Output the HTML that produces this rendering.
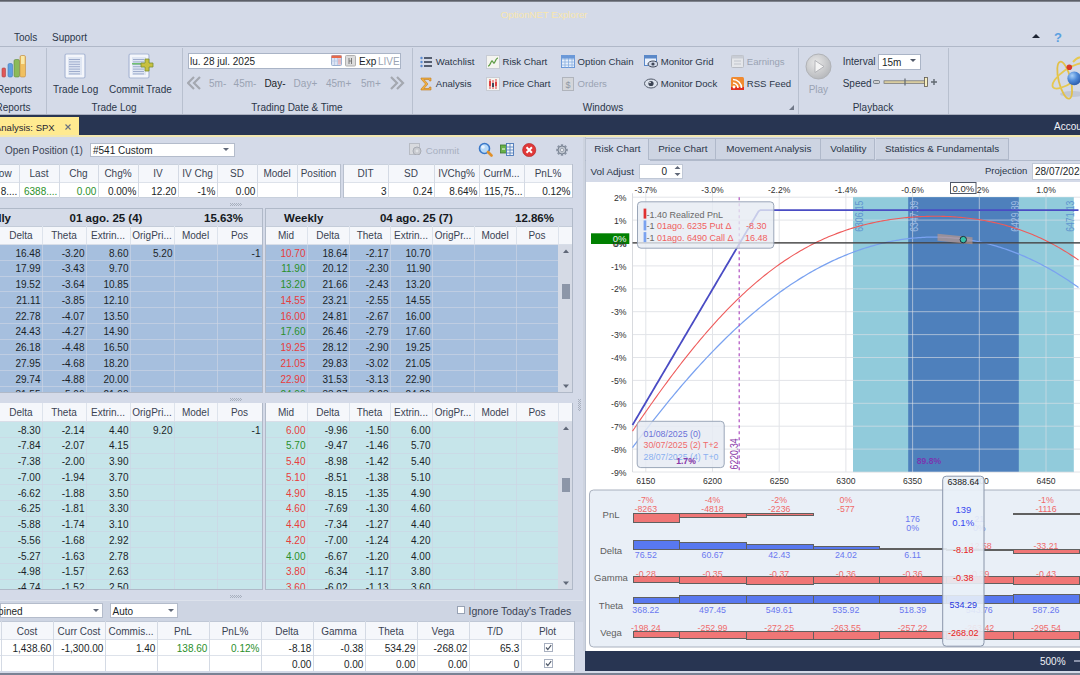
<!DOCTYPE html>
<html><head><meta charset="utf-8"><style>
html,body{margin:0;padding:0;}
body{width:1080px;height:675px;position:relative;overflow:hidden;background:#d4dae8;font-family:"Liberation Sans",sans-serif;}
body div, body svg{position:absolute;}
.t{white-space:nowrap;}
</style></head><body>
<div style="left:0px;top:0px;width:1080px;height:2px;background:linear-gradient(#4a4d55,#9095a0)"></div>
<div class="t" style="left:444.0px;width:200px;text-align:center;top:8.0px;line-height:14px;color:#f8e6ac;font-size:9.7px">OptionNET Explorer</div>
<div class="t" style="left:14px;top:31.0px;line-height:14px;color:#2b3648;font-size:10px">Tools</div>
<div class="t" style="left:52px;top:31.0px;line-height:14px;color:#2b3648;font-size:10px">Support</div>
<svg style="left:1031px;top:32px;" width="10" height="8" viewBox="0 0 10 8"><path d="M1 6 L5 2 L9 6 Z" fill="#1d2433"/></svg>
<div class="t" style="left:1050.0px;width:16px;text-align:center;top:31.0px;line-height:14px;color:#5aa0e0;font-size:13px;font-weight:bold">?</div>
<div style="left:0px;top:46px;width:1080px;height:1px;background:#b0b8c8"></div>
<div style="left:46px;top:48px;width:1px;height:66px;background:#b8c0cf"></div>
<div style="left:182px;top:48px;width:1px;height:66px;background:#b8c0cf"></div>
<div style="left:412px;top:48px;width:1px;height:66px;background:#b8c0cf"></div>
<div style="left:798px;top:48px;width:1px;height:66px;background:#b8c0cf"></div>
<div style="left:948px;top:48px;width:1px;height:66px;background:#b8c0cf"></div>
<div class="t" style="left:-47.0px;width:120px;text-align:center;top:101.0px;line-height:14px;color:#2b3648;font-size:10px">Reports</div>
<div class="t" style="left:54.0px;width:120px;text-align:center;top:101.0px;line-height:14px;color:#2b3648;font-size:10px">Trade Log</div>
<div class="t" style="left:237.0px;width:120px;text-align:center;top:101.0px;line-height:14px;color:#2b3648;font-size:10px">Trading Date &amp; Time</div>
<div class="t" style="left:543.0px;width:120px;text-align:center;top:101.0px;line-height:14px;color:#2b3648;font-size:10px">Windows</div>
<div class="t" style="left:813.0px;width:120px;text-align:center;top:101.0px;line-height:14px;color:#2b3648;font-size:10px">Playback</div>
<svg style="left:0px;top:54px;" width="28" height="24" viewBox="0 0 28 24">
      <rect x="2" y="14" width="3.5" height="9" rx="1" fill="#e05858" stroke="#b04040" stroke-width="0.6"/>
      <rect x="8" y="9.5" width="4.5" height="13.5" rx="1.5" fill="#5fa0e0" stroke="#3f78b8" stroke-width="0.6"/>
      <rect x="14" y="5.5" width="5.5" height="17.5" rx="1.5" fill="#8cba58" stroke="#5f8a38" stroke-width="0.6"/>
      <rect x="20" y="1.5" width="5.5" height="21.5" rx="1.5" fill="#f0c060" stroke="#c08a40" stroke-width="0.6"/>
      <rect x="21" y="2" width="3.5" height="8" fill="#f8e8a8"/></svg>
<div class="t" style="left:-3px;top:82.5px;line-height:14px;color:#2b3648;font-size:10px">Reports</div>
<svg style="left:64px;top:53px;" width="22" height="26" viewBox="0 0 22 26"><rect x="1" y="1" width="20" height="24" rx="1.5" fill="#f4f6fb" stroke="#a9b7d4" stroke-width="1.2"/><rect x="4" y="4" width="14" height="18" fill="#dfe6f3"/><rect x="5" y="6.0" width="11" height="1" fill="#9eaccc"/><rect x="5" y="8.4" width="11" height="1" fill="#9eaccc"/><rect x="5" y="10.8" width="11" height="1" fill="#9eaccc"/><rect x="5" y="13.2" width="11" height="1" fill="#9eaccc"/><rect x="5" y="15.6" width="11" height="1" fill="#9eaccc"/><rect x="5" y="18.0" width="11" height="1" fill="#9eaccc"/><rect x="5" y="20.4" width="11" height="1" fill="#9eaccc"/></svg>
<div class="t" style="left:53px;top:82.5px;line-height:14px;color:#2b3648;font-size:10px">Trade Log</div>
<svg style="left:128px;top:53px;" width="26" height="26" viewBox="0 0 26 26"><rect x="1" y="1" width="20" height="24" rx="1.5" fill="#f4f6fb" stroke="#a9b7d4" stroke-width="1.2"/><rect x="4" y="4" width="14" height="18" fill="#dfe6f3"/><rect x="5" y="6.0" width="11" height="1" fill="#9eaccc"/><rect x="5" y="8.4" width="11" height="1" fill="#9eaccc"/><rect x="5" y="10.8" width="11" height="1" fill="#9eaccc"/><rect x="5" y="13.2" width="11" height="1" fill="#9eaccc"/><rect x="5" y="15.6" width="11" height="1" fill="#9eaccc"/><rect x="5" y="18.0" width="11" height="1" fill="#9eaccc"/><rect x="5" y="20.4" width="11" height="1" fill="#9eaccc"/>
      <rect x="4" y="10" width="10" height="1.5" fill="#70c070"/>
      <path d="M17 6 h4 v4 h4 v4 h-4 v4 h-4 v-4 h-4 v-4 h4 z" fill="#c8c040" stroke="#789030" stroke-width="0.8"/></svg>
<div class="t" style="left:109px;top:82.5px;line-height:14px;color:#2b3648;font-size:10px">Commit Trade</div>
<div style="left:188px;top:53px;width:213px;height:16px;background:#fff;border:1px solid #aab4c6;box-sizing:border-box"></div>
<div class="t" style="left:190px;top:55.0px;line-height:14px;color:#1b1f28;font-size:10px">lu. 28 jul. 2025</div>
<svg style="left:331px;top:55px;" width="26" height="12" viewBox="0 0 26 12"><rect x="0.5" y="0.5" width="10" height="10" rx="1" fill="#dce4f4" stroke="#9ab0d0"/><rect x="0.5" y="0.5" width="10" height="2.5" fill="#e86848"/><path d="M3.5 3 v7 M6.5 3 v7 M0.5 6 h10" stroke="#b8c8e4" stroke-width="0.8"/><rect x="7" y="3.5" width="3" height="6" fill="#f0a0a0" opacity="0.6"/>
        <rect x="14.5" y="0.5" width="10" height="10.5" rx="1" fill="#dcdcdc" stroke="#b0b0b0"/><path d="M18 3 v6 M20.5 3 v6 M18 6 h2.5" stroke="#707070" stroke-width="0.9"/></svg>
<div class="t" style="left:359px;top:55.0px;line-height:14px;color:#1b1f28;font-size:10px">Exp</div>
<div class="t" style="left:378px;top:55.0px;line-height:14px;color:#9aa3b3;font-size:10px">LIVE</div>
<svg style="left:187px;top:76px;" width="15" height="14" viewBox="0 0 15 14"><path d="M7 1 L1 7 L7 13 M13 1 L7 7 L13 13" fill="none" stroke="#a4a8b0" stroke-width="2.2"/></svg>
<svg style="left:390px;top:76px;" width="15" height="14" viewBox="0 0 15 14"><path d="M1 1 L7 7 L1 13 M7 1 L13 7 L7 13" fill="none" stroke="#a4a8b0" stroke-width="2.2"/></svg>
<div class="t" style="left:209px;top:76.5px;line-height:14px;color:#9aa3b3;font-size:10px">5m-</div>
<div class="t" style="left:233.6px;top:76.5px;line-height:14px;color:#9aa3b3;font-size:10px">45m-</div>
<div class="t" style="left:264.4px;top:76.5px;line-height:14px;color:#1b1f28;font-size:10px">Day-</div>
<div class="t" style="left:293.6px;top:76.5px;line-height:14px;color:#9aa3b3;font-size:10px">Day+</div>
<div class="t" style="left:326px;top:76.5px;line-height:14px;color:#9aa3b3;font-size:10px">45m+</div>
<div class="t" style="left:361px;top:76.5px;line-height:14px;color:#9aa3b3;font-size:10px">5m+</div>
<div class="t" style="left:435.8px;top:54.9px;line-height:14px;color:#2b3648;font-size:9.6px">Watchlist</div>
<div class="t" style="left:502.5px;top:54.9px;line-height:14px;color:#2b3648;font-size:9.6px">Risk Chart</div>
<div class="t" style="left:577.5999999999999px;top:54.9px;line-height:14px;color:#2b3648;font-size:9.6px">Option Chain</div>
<div class="t" style="left:660.6999999999999px;top:54.9px;line-height:14px;color:#2b3648;font-size:9.6px">Monitor Grid</div>
<div class="t" style="left:746.8px;top:54.9px;line-height:14px;color:#9aa3b3;font-size:9.6px">Earnings</div>
<div class="t" style="left:435.8px;top:77.0px;line-height:14px;color:#2b3648;font-size:9.6px">Analysis</div>
<div class="t" style="left:502.5px;top:77.0px;line-height:14px;color:#2b3648;font-size:9.6px">Price Chart</div>
<div class="t" style="left:577.5999999999999px;top:77.0px;line-height:14px;color:#9aa3b3;font-size:9.6px">Orders</div>
<div class="t" style="left:660.6999999999999px;top:77.0px;line-height:14px;color:#2b3648;font-size:9.6px">Monitor Dock</div>
<div class="t" style="left:746.8px;top:77.0px;line-height:14px;color:#2b3648;font-size:9.6px">RSS Feed</div>
<svg style="left:420px;top:56px;" width="13" height="12" viewBox="0 0 13 12"><circle cx="1.5" cy="2" r="1.2" fill="#5a8ad0"/><circle cx="1.5" cy="6" r="1.2" fill="#5a8ad0"/><circle cx="1.5" cy="10" r="1.2" fill="#5a8ad0"/><path d="M4 2 h8 M4 6 h8 M4 10 h8" stroke="#2b3648" stroke-width="1.4"/></svg>
<svg style="left:486px;top:55px;" width="14" height="14" viewBox="0 0 14 14"><rect x="0.5" y="0.5" width="13" height="13" fill="#f4f4f0" stroke="#c8ccd4"/><path d="M2 11 C5 11 5 3 7 7 S 9 3 12 3" fill="none" stroke="#5a9a40" stroke-width="1.2"/></svg>
<svg style="left:561px;top:55px;" width="14" height="13" viewBox="0 0 14 13"><rect x="0.5" y="0.5" width="13" height="12" fill="#e8f0fc" stroke="#6a98d8"/><path d="M0.5 4 h13 M0.5 7 h13 M0.5 10 h13 M4 0.5 v12 M7.5 0.5 v12 M11 0.5 v12" stroke="#88aee0" stroke-width="0.8"/><rect x="0.5" y="0.5" width="13" height="3" fill="#6a98d8"/></svg>
<svg style="left:644px;top:55px;" width="14" height="13" viewBox="0 0 14 13"><rect x="0.5" y="0.5" width="12" height="10" fill="#e8f0fc" stroke="#5a88c8"/><rect x="0.5" y="0.5" width="12" height="3" fill="#5a88c8"/><ellipse cx="9" cy="9" rx="5" ry="3" fill="#d0d8e8" stroke="#404858"/><circle cx="9" cy="9" r="1.6" fill="#404858"/></svg>
<svg style="left:731px;top:55px;" width="13" height="13" viewBox="0 0 13 13"><rect x="0.5" y="0.5" width="12" height="12" rx="1" fill="#e4e6ea" stroke="#b8bcc4"/><rect x="0.5" y="0.5" width="12" height="3" fill="#c8ccd4"/><path d="M3 6 h7 M3 9 h7" stroke="#c0c4cc"/></svg>
<svg style="left:420px;top:77px;" width="12" height="14" viewBox="0 0 12 14"><path d="M1 1 h10 v3 h-1.5 l-0.5 -1.5 h-5 l4 4.5 -4 4.5 h5 l0.5 -1.5 h1.5 v3 h-10 v-1 l4.5 -5 -4.5 -5 z" fill="#f0b040" stroke="#c07820" stroke-width="0.6"/></svg>
<svg style="left:486px;top:77px;" width="14" height="14" viewBox="0 0 14 14"><rect x="0.5" y="0.5" width="13" height="13" fill="#f4f4f0" stroke="#c8ccd4"/><path d="M4 2 v10 M7 3 v9 M10 2 v10" stroke="#e04040" stroke-width="1"/><rect x="3" y="4" width="2" height="5" fill="#e04040"/><rect x="9" y="5" width="2" height="4" fill="#e04040"/><rect x="6" y="6" width="2" height="4" fill="#404858"/></svg>
<svg style="left:562px;top:77px;" width="12" height="14" viewBox="0 0 12 14"><rect x="0.5" y="0.5" width="11" height="13" fill="#d4d6da" stroke="#b0b4bc"/><text x="6" y="11" font-size="9" text-anchor="middle" fill="#9098a4" font-family="Liberation Sans">$</text></svg>
<svg style="left:644px;top:78px;" width="14" height="11" viewBox="0 0 14 11"><ellipse cx="7" cy="5.5" rx="6.5" ry="4.5" fill="#dce2ec" stroke="#505868"/><circle cx="7" cy="5.5" r="2.6" fill="#3c4454"/><circle cx="6" cy="4.5" r="0.8" fill="#fff"/></svg>
<svg style="left:731px;top:77px;" width="13" height="13" viewBox="0 0 13 13"><rect x="0" y="0" width="13" height="13" rx="1.5" fill="#f08a30"/><rect x="0" y="10" width="13" height="3" fill="#e03020"/><circle cx="3" cy="10" r="1.4" fill="#fff"/><path d="M2 6 a5 5 0 0 1 5 5 M2 2.5 a8.5 8.5 0 0 1 8.5 8.5" fill="none" stroke="#fff" stroke-width="1.6"/></svg>
<svg style="left:789px;top:105px;" width="6" height="6" viewBox="0 0 6 6"><path d="M5 0 v5 h-5 z" fill="#707888"/></svg>
<svg style="left:805px;top:53px;" width="27" height="27" viewBox="0 0 27 27"><defs><radialGradient id="pg" cx="0.4" cy="0.35" r="0.7"><stop offset="0" stop-color="#e8e8e8"/><stop offset="1" stop-color="#b4b6ba"/></radialGradient></defs><circle cx="13.5" cy="13.5" r="12.5" fill="url(#pg)" stroke="#b0b2b6"/><path d="M10 7.5 L19 13.5 L10 19.5 Z" fill="#f4f4f4" stroke="#a8aaae" stroke-width="0.8"/></svg>
<div class="t" style="left:798.4px;width:40px;text-align:center;top:83.4px;line-height:14px;color:#9aa3b3;font-size:10px">Play</div>
<div class="t" style="left:842.7px;top:55.0px;line-height:14px;color:#2b3648;font-size:10px">Interval</div>
<div style="left:878px;top:53.5px;width:43px;height:16px;background:#fff;border:1px solid #aab4c6;box-sizing:border-box"></div>
<div class="t" style="left:882px;top:55.5px;line-height:14px;color:#1b1f28;font-size:10px">15m</div>
<svg style="left:910px;top:59px;" width="7" height="4" viewBox="0 0 7 4"><path d="M0 0 h6 l-3 3 z" fill="#505868"/></svg>
<div class="t" style="left:842.7px;top:76.5px;line-height:14px;color:#2b3648;font-size:10px">Speed</div>
<svg style="left:872px;top:76px;" width="66" height="12" viewBox="0 0 66 12"><rect x="1.5" y="4.5" width="6" height="3" rx="1" fill="#d0d0d0" stroke="#606870" stroke-width="0.8"/>
       <rect x="12" y="4.8" width="43" height="2.6" fill="#d8cca0" stroke="#707070" stroke-width="0.7"/>
       <path d="M33 2.5 v7" stroke="#606870" stroke-width="1.2"/>
       <rect x="52.5" y="1.5" width="3" height="9" fill="#f6eec0" stroke="#605a50" stroke-width="0.8"/>
       <path d="M59 6 h6 M62 3 v6" stroke="#606870" stroke-width="1.4"/></svg>
<svg style="left:1040px;top:50px;" width="40" height="60" viewBox="0 0 40 60"><ellipse cx="32" cy="44" rx="12" ry="3" fill="#bcc2ce" opacity="0.8"/>
       <ellipse cx="24.7" cy="30.2" rx="6" ry="19" fill="none" stroke="#e2c048" stroke-width="1.8" transform="rotate(-14 24.7 30.2)"/>
       <ellipse cx="29" cy="26" rx="7" ry="19.5" fill="none" stroke="#e6c850" stroke-width="1.8" transform="rotate(55 29 26)"/>
       <path d="M33 12 Q40 4 44 10" fill="none" stroke="#e6c850" stroke-width="2"/>
       <defs><radialGradient id="sph" cx="0.35" cy="0.3" r="0.75"><stop offset="0" stop-color="#a8d0f8"/><stop offset="0.5" stop-color="#4f8ad8"/><stop offset="1" stop-color="#2a5aa8"/></radialGradient></defs>
       <circle cx="34.2" cy="28.4" r="6.8" fill="url(#sph)"/>
       <circle cx="29.3" cy="17.3" r="2.8" fill="#d83828"/></svg>
<div style="left:0px;top:114px;width:1080px;height:1px;background:#a8aebe"></div>
<div style="left:0px;top:115px;width:1080px;height:20px;background:#283552"></div>
<div style="left:0px;top:117px;width:79px;height:18px;background:#ffea90"></div>
<div style="left:0px;top:135px;width:1080px;height:2px;background:#f2e7b0"></div>
<div class="t" style="left:-5px;top:121.0px;line-height:14px;color:#1f2430;font-size:9.5px">Analysis: SPX</div>
<svg style="left:65px;top:124px;" width="6" height="6" viewBox="0 0 6 6"><path d="M0.5 0.5 L5.5 5.5 M5.5 0.5 L0.5 5.5" stroke="#687080" stroke-width="1.1"/></svg>
<div class="t" style="left:1054px;top:120.0px;line-height:14px;color:#f0f2f8;font-size:10px">Accou</div>
<div class="t" style="left:5px;top:144.0px;line-height:14px;color:#3a4353;font-size:10px">Open Position (1)</div>
<div style="left:90px;top:142.5px;width:144.5px;height:14.5px;background:#fff;border:1px solid #b4bccb;box-sizing:border-box"></div>
<div class="t" style="left:93px;top:144.0px;line-height:14px;color:#1b1f28;font-size:10px">#541 Custom</div>
<svg style="left:223px;top:148px;" width="7" height="4" viewBox="0 0 7 4"><path d="M0 0 h6 l-3 3 z" fill="#606878"/></svg>
<svg style="left:409px;top:143px;" width="13" height="12" viewBox="0 0 13 12"><rect x="0.5" y="0.5" width="10" height="11" fill="#d8dade" stroke="#b8bcc4"/><circle cx="8" cy="8" r="4" fill="#c8cacf" stroke="#a8acb4"/><circle cx="8" cy="8" r="1.4" fill="#e0e2e6"/></svg>
<div class="t" style="left:425.8px;top:144.0px;line-height:14px;color:#a8b0c0;font-size:9.7px">Commit</div>
<svg style="left:478px;top:142px;" width="15" height="15" viewBox="0 0 15 15"><circle cx="6.5" cy="6.5" r="5" fill="#b8daf8" stroke="#3a78c8" stroke-width="1.6"/><circle cx="5" cy="5" r="1.8" fill="#eaf4fe"/><path d="M10 10 L13.5 13.5" stroke="#e0902a" stroke-width="2.6" stroke-linecap="round"/></svg>
<svg style="left:500px;top:143px;" width="14" height="13" viewBox="0 0 14 13"><rect x="0.5" y="2" width="6" height="8" fill="#68b048" stroke="#3c7830" stroke-width="0.8"/><rect x="6.5" y="0.5" width="7" height="12" fill="#f0f4fa" stroke="#4a78b8" stroke-width="0.9"/><path d="M6.5 4 h7 M6.5 7 h7 M6.5 10 h7 M10 0.5 v12" stroke="#4a78b8" stroke-width="0.8"/><path d="M2 6 h3" stroke="#fff"/></svg>
<svg style="left:522px;top:143px;" width="15" height="14" viewBox="0 0 15 14"><circle cx="7.2" cy="7" r="6.6" fill="#e03838" stroke="#b02020" stroke-width="0.6"/><path d="M4.5 4.3 L9.9 9.7 M9.9 4.3 L4.5 9.7" stroke="#fff" stroke-width="2"/></svg>
<svg style="left:555px;top:143px;" width="14" height="14" viewBox="0 0 14 14"><g transform="translate(7 7)"><path d="M5.80 0.00 L3.50 0.00 M4.10 4.10 L2.47 2.47 M0.00 5.80 L0.00 3.50 M-4.10 4.10 L-2.47 2.47 M-5.80 0.00 L-3.50 0.00 M-4.10 -4.10 L-2.47 -2.47 M-0.00 -5.80 L-0.00 -3.50 M4.10 -4.10 L2.47 -2.47" stroke="#8a94a4" stroke-width="2.4"/><circle r="4" fill="#c0c6d0" stroke="#7a8494" stroke-width="1"/><circle r="1.6" fill="#eef0f4" stroke="#7a8494" stroke-width="0.6"/></g></svg>
<div style="left:0px;top:164px;width:341px;height:18px;background:#f5f7fb"></div>
<div style="left:0px;top:182px;width:341px;height:15px;background:#fff"></div>
<div style="left:0px;top:164px;width:341px;height:1px;background:#c8d0dc"></div>
<div style="left:0px;top:182px;width:341px;height:1px;background:#dde2ea"></div>
<div style="left:0px;top:197px;width:341px;height:1px;background:#c8d0dc"></div>
<div style="left:19px;top:164px;width:1px;height:34px;background:#d4dae4"></div>
<div style="left:59px;top:164px;width:1px;height:34px;background:#d4dae4"></div>
<div style="left:98px;top:164px;width:1px;height:34px;background:#d4dae4"></div>
<div style="left:138px;top:164px;width:1px;height:34px;background:#d4dae4"></div>
<div style="left:178px;top:164px;width:1px;height:34px;background:#d4dae4"></div>
<div style="left:217px;top:164px;width:1px;height:34px;background:#d4dae4"></div>
<div style="left:257px;top:164px;width:1px;height:34px;background:#d4dae4"></div>
<div style="left:297px;top:164px;width:1px;height:34px;background:#d4dae4"></div>
<div style="left:340px;top:164px;width:1px;height:34px;background:#d4dae4"></div>
<div style="left:340px;top:164px;width:1px;height:34px;background:#b8c0ce"></div>
<div class="t" style="left:-27.5px;width:60px;text-align:center;top:166.8px;line-height:14px;color:#3a4353;font-size:10px">Low</div>
<div class="t" style="right:1062.7px;top:184.7px;line-height:14px;color:#1b1f28;font-size:10px">8....</div>
<div class="t" style="left:9.0px;width:60px;text-align:center;top:166.8px;line-height:14px;color:#3a4353;font-size:10px">Last</div>
<div class="t" style="right:1022.7px;top:184.7px;line-height:14px;color:#2a8f2a;font-size:10px">6388....</div>
<div class="t" style="left:48.5px;width:60px;text-align:center;top:166.8px;line-height:14px;color:#3a4353;font-size:10px">Chg</div>
<div class="t" style="right:983.7px;top:184.7px;line-height:14px;color:#2a8f2a;font-size:10px">0.00</div>
<div class="t" style="left:88.0px;width:60px;text-align:center;top:166.8px;line-height:14px;color:#3a4353;font-size:10px">Chg%</div>
<div class="t" style="right:943.7px;top:184.7px;line-height:14px;color:#1b1f28;font-size:10px">0.00%</div>
<div class="t" style="left:128.0px;width:60px;text-align:center;top:166.8px;line-height:14px;color:#3a4353;font-size:10px">IV</div>
<div class="t" style="right:903.7px;top:184.7px;line-height:14px;color:#1b1f28;font-size:10px">12.20</div>
<div class="t" style="left:167.5px;width:60px;text-align:center;top:166.8px;line-height:14px;color:#3a4353;font-size:10px">IV Chg</div>
<div class="t" style="right:864.7px;top:184.7px;line-height:14px;color:#1b1f28;font-size:10px">-1%</div>
<div class="t" style="left:207.0px;width:60px;text-align:center;top:166.8px;line-height:14px;color:#3a4353;font-size:10px">SD</div>
<div class="t" style="right:824.7px;top:184.7px;line-height:14px;color:#1b1f28;font-size:10px">0.00</div>
<div class="t" style="left:247.0px;width:60px;text-align:center;top:166.8px;line-height:14px;color:#3a4353;font-size:10px">Model</div>
<div class="t" style="left:288.5px;width:60px;text-align:center;top:166.8px;line-height:14px;color:#3a4353;font-size:10px">Position</div>
<div style="left:343px;top:164px;width:229px;height:18px;background:#f5f7fb"></div>
<div style="left:343px;top:182px;width:229px;height:15px;background:#fff"></div>
<div style="left:343px;top:164px;width:230px;height:1px;background:#c8d0dc"></div>
<div style="left:343px;top:182px;width:230px;height:1px;background:#dde2ea"></div>
<div style="left:343px;top:197px;width:230px;height:1px;background:#c8d0dc"></div>
<div style="left:343px;top:164px;width:1px;height:34px;background:#d4dae4"></div>
<div style="left:388px;top:164px;width:1px;height:34px;background:#d4dae4"></div>
<div style="left:434px;top:164px;width:1px;height:34px;background:#d4dae4"></div>
<div style="left:479px;top:164px;width:1px;height:34px;background:#d4dae4"></div>
<div style="left:524px;top:164px;width:1px;height:34px;background:#d4dae4"></div>
<div style="left:572px;top:164px;width:1px;height:34px;background:#d4dae4"></div>
<div style="left:343px;top:164px;width:1px;height:34px;background:#b8c0ce"></div>
<div style="left:572px;top:164px;width:1px;height:34px;background:#b8c0ce"></div>
<div class="t" style="left:335.5px;width:60px;text-align:center;top:166.8px;line-height:14px;color:#3a4353;font-size:10px">DIT</div>
<div class="t" style="right:693.5px;top:184.7px;line-height:14px;color:#1b1f28;font-size:10px">3</div>
<div class="t" style="left:381.0px;width:60px;text-align:center;top:166.8px;line-height:14px;color:#3a4353;font-size:10px">SD</div>
<div class="t" style="right:647.5px;top:184.7px;line-height:14px;color:#1b1f28;font-size:10px">0.24</div>
<div class="t" style="left:426.5px;width:60px;text-align:center;top:166.8px;line-height:14px;color:#3a4353;font-size:10px">IVChg%</div>
<div class="t" style="right:602.5px;top:184.7px;line-height:14px;color:#1b1f28;font-size:10px">8.64%</div>
<div class="t" style="left:471.5px;width:60px;text-align:center;top:166.8px;line-height:14px;color:#3a4353;font-size:10px">CurrM...</div>
<div class="t" style="right:557.5px;top:184.7px;line-height:14px;color:#1b1f28;font-size:10px">115,75...</div>
<div class="t" style="left:518.0px;width:60px;text-align:center;top:166.8px;line-height:14px;color:#3a4353;font-size:10px">PnL%</div>
<div class="t" style="right:509.5px;top:184.7px;line-height:14px;color:#1b1f28;font-size:10px">0.12%</div>
<svg style="left:230px;top:202.5px;" width="12" height="4" viewBox="0 0 12 4"><rect x="0" y="0" width="1" height="1" fill="#a8b0be"/><rect x="0" y="2" width="1" height="1" fill="#a8b0be"/><rect x="1" y="1" width="1" height="1" fill="#a8b0be"/><rect x="2" y="0" width="1" height="1" fill="#a8b0be"/><rect x="2" y="2" width="1" height="1" fill="#a8b0be"/><rect x="3" y="1" width="1" height="1" fill="#a8b0be"/><rect x="4" y="0" width="1" height="1" fill="#a8b0be"/><rect x="4" y="2" width="1" height="1" fill="#a8b0be"/><rect x="5" y="1" width="1" height="1" fill="#a8b0be"/><rect x="6" y="0" width="1" height="1" fill="#a8b0be"/><rect x="6" y="2" width="1" height="1" fill="#a8b0be"/><rect x="7" y="1" width="1" height="1" fill="#a8b0be"/><rect x="8" y="0" width="1" height="1" fill="#a8b0be"/><rect x="8" y="2" width="1" height="1" fill="#a8b0be"/><rect x="9" y="1" width="1" height="1" fill="#a8b0be"/><rect x="10" y="0" width="1" height="1" fill="#a8b0be"/><rect x="10" y="2" width="1" height="1" fill="#a8b0be"/><rect x="11" y="1" width="1" height="1" fill="#a8b0be"/></svg>
<div style="left:-4px;top:208px;width:267px;height:185px;border:1px solid #b0b9c8;box-sizing:border-box;background:#a6bfde"></div>
<div style="left:-3px;top:209px;width:265px;height:17px;background:#d5dbe8"></div>
<div class="t" style="right:1069px;top:211.0px;line-height:14px;color:#141820;font-size:11.5px;font-weight:bold">dly</div>
<div class="t" style="left:46.0px;width:120px;text-align:center;top:211.0px;line-height:14px;color:#141820;font-size:11.5px;font-weight:bold">01 ago. 25 (4)</div>
<div class="t" style="right:837px;top:211.0px;line-height:14px;color:#141820;font-size:11.5px;font-weight:bold">15.63%</div>
<div style="left:-3px;top:226px;width:265px;height:18px;background:#f5f7fb"></div>
<div style="left:-3px;top:226px;width:265px;height:1px;background:#c4ccd9"></div>
<div style="left:-3px;top:244px;width:265px;height:1px;background:#d8dee8"></div>
<div style="left:42px;top:226px;width:1px;height:18px;background:#dde3ec"></div>
<div style="left:42px;top:245px;width:1px;height:147px;background:rgba(205,212,228,0.65)"></div>
<div style="left:86px;top:226px;width:1px;height:18px;background:#dde3ec"></div>
<div style="left:86px;top:245px;width:1px;height:147px;background:rgba(205,212,228,0.65)"></div>
<div style="left:130px;top:226px;width:1px;height:18px;background:#dde3ec"></div>
<div style="left:130px;top:245px;width:1px;height:147px;background:rgba(205,212,228,0.65)"></div>
<div style="left:174px;top:226px;width:1px;height:18px;background:#dde3ec"></div>
<div style="left:174px;top:245px;width:1px;height:147px;background:rgba(205,212,228,0.65)"></div>
<div style="left:217px;top:226px;width:1px;height:18px;background:#dde3ec"></div>
<div style="left:217px;top:245px;width:1px;height:147px;background:rgba(205,212,228,0.65)"></div>
<div class="t" style="left:-9.0px;width:60px;text-align:center;top:229.0px;line-height:14px;color:#3a4353;font-size:10px">Delta</div>
<div class="t" style="left:34.0px;width:60px;text-align:center;top:229.0px;line-height:14px;color:#3a4353;font-size:10px">Theta</div>
<div class="t" style="left:78.0px;width:60px;text-align:center;top:229.0px;line-height:14px;color:#3a4353;font-size:10px">Extrin...</div>
<div class="t" style="left:122.0px;width:60px;text-align:center;top:229.0px;line-height:14px;color:#3a4353;font-size:10px">OrigPri...</div>
<div class="t" style="left:165.5px;width:60px;text-align:center;top:229.0px;line-height:14px;color:#3a4353;font-size:10px">Model</div>
<div class="t" style="left:209.5px;width:60px;text-align:center;top:229.0px;line-height:14px;color:#3a4353;font-size:10px">Pos</div>
<div style="left:-3px;top:245px;width:265px;height:147px;overflow:hidden">
<div style="left:0px;top:14.75px;width:266px;height:1px;background:rgba(205,212,228,0.65)"></div>
<div class="t" style="right:221.50px;top:0.70px;line-height:15.75px;color:#1b1f28;font-size:10px">16.48</div>
<div class="t" style="right:177.50px;top:0.70px;line-height:15.75px;color:#1b1f28;font-size:10px">-3.20</div>
<div class="t" style="right:133.50px;top:0.70px;line-height:15.75px;color:#1b1f28;font-size:10px">8.60</div>
<div class="t" style="right:89.50px;top:0.70px;line-height:15.75px;color:#1b1f28;font-size:10px">5.20</div>
<div class="t" style="right:1.50px;top:0.70px;line-height:15.75px;color:#1b1f28;font-size:10px">-1</div>
<div style="left:0px;top:30.50px;width:266px;height:1px;background:rgba(205,212,228,0.65)"></div>
<div class="t" style="right:221.50px;top:16.45px;line-height:15.75px;color:#1b1f28;font-size:10px">17.99</div>
<div class="t" style="right:177.50px;top:16.45px;line-height:15.75px;color:#1b1f28;font-size:10px">-3.43</div>
<div class="t" style="right:133.50px;top:16.45px;line-height:15.75px;color:#1b1f28;font-size:10px">9.70</div>
<div style="left:0px;top:46.25px;width:266px;height:1px;background:rgba(205,212,228,0.65)"></div>
<div class="t" style="right:221.50px;top:32.20px;line-height:15.75px;color:#1b1f28;font-size:10px">19.52</div>
<div class="t" style="right:177.50px;top:32.20px;line-height:15.75px;color:#1b1f28;font-size:10px">-3.64</div>
<div class="t" style="right:133.50px;top:32.20px;line-height:15.75px;color:#1b1f28;font-size:10px">10.85</div>
<div style="left:0px;top:62.00px;width:266px;height:1px;background:rgba(205,212,228,0.65)"></div>
<div class="t" style="right:221.50px;top:47.95px;line-height:15.75px;color:#1b1f28;font-size:10px">21.11</div>
<div class="t" style="right:177.50px;top:47.95px;line-height:15.75px;color:#1b1f28;font-size:10px">-3.85</div>
<div class="t" style="right:133.50px;top:47.95px;line-height:15.75px;color:#1b1f28;font-size:10px">12.10</div>
<div style="left:0px;top:77.75px;width:266px;height:1px;background:rgba(205,212,228,0.65)"></div>
<div class="t" style="right:221.50px;top:63.70px;line-height:15.75px;color:#1b1f28;font-size:10px">22.78</div>
<div class="t" style="right:177.50px;top:63.70px;line-height:15.75px;color:#1b1f28;font-size:10px">-4.07</div>
<div class="t" style="right:133.50px;top:63.70px;line-height:15.75px;color:#1b1f28;font-size:10px">13.50</div>
<div style="left:0px;top:93.50px;width:266px;height:1px;background:rgba(205,212,228,0.65)"></div>
<div class="t" style="right:221.50px;top:79.45px;line-height:15.75px;color:#1b1f28;font-size:10px">24.43</div>
<div class="t" style="right:177.50px;top:79.45px;line-height:15.75px;color:#1b1f28;font-size:10px">-4.27</div>
<div class="t" style="right:133.50px;top:79.45px;line-height:15.75px;color:#1b1f28;font-size:10px">14.90</div>
<div style="left:0px;top:109.25px;width:266px;height:1px;background:rgba(205,212,228,0.65)"></div>
<div class="t" style="right:221.50px;top:95.20px;line-height:15.75px;color:#1b1f28;font-size:10px">26.18</div>
<div class="t" style="right:177.50px;top:95.20px;line-height:15.75px;color:#1b1f28;font-size:10px">-4.48</div>
<div class="t" style="right:133.50px;top:95.20px;line-height:15.75px;color:#1b1f28;font-size:10px">16.50</div>
<div style="left:0px;top:125.00px;width:266px;height:1px;background:rgba(205,212,228,0.65)"></div>
<div class="t" style="right:221.50px;top:110.95px;line-height:15.75px;color:#1b1f28;font-size:10px">27.95</div>
<div class="t" style="right:177.50px;top:110.95px;line-height:15.75px;color:#1b1f28;font-size:10px">-4.68</div>
<div class="t" style="right:133.50px;top:110.95px;line-height:15.75px;color:#1b1f28;font-size:10px">18.20</div>
<div style="left:0px;top:140.75px;width:266px;height:1px;background:rgba(205,212,228,0.65)"></div>
<div class="t" style="right:221.50px;top:126.70px;line-height:15.75px;color:#1b1f28;font-size:10px">29.74</div>
<div class="t" style="right:177.50px;top:126.70px;line-height:15.75px;color:#1b1f28;font-size:10px">-4.88</div>
<div class="t" style="right:133.50px;top:126.70px;line-height:15.75px;color:#1b1f28;font-size:10px">20.00</div>
<div style="left:0px;top:156.50px;width:266px;height:1px;background:rgba(205,212,228,0.65)"></div>
<div class="t" style="right:221.50px;top:142.45px;line-height:15.75px;color:#1b1f28;font-size:10px">31.55</div>
<div class="t" style="right:177.50px;top:142.45px;line-height:15.75px;color:#1b1f28;font-size:10px">-5.06</div>
<div class="t" style="right:133.50px;top:142.45px;line-height:15.75px;color:#1b1f28;font-size:10px">21.90</div>
</div>
<div style="left:265px;top:208px;width:308px;height:185px;border:1px solid #b0b9c8;box-sizing:border-box;background:#a6bfde"></div>
<div style="left:266px;top:209px;width:306px;height:17px;background:#d5dbe8"></div>
<div class="t" style="left:284px;top:211.0px;line-height:14px;color:#141820;font-size:11.5px;font-weight:bold">Weekly</div>
<div class="t" style="left:356.4px;width:120px;text-align:center;top:211.0px;line-height:14px;color:#141820;font-size:11.5px;font-weight:bold">04 ago. 25 (7)</div>
<div class="t" style="right:526px;top:211.0px;line-height:14px;color:#141820;font-size:11.5px;font-weight:bold">12.86%</div>
<div style="left:266px;top:226px;width:306px;height:18px;background:#f5f7fb"></div>
<div style="left:266px;top:226px;width:306px;height:1px;background:#c4ccd9"></div>
<div style="left:266px;top:244px;width:306px;height:1px;background:#d8dee8"></div>
<div style="left:307px;top:226px;width:1px;height:18px;background:#dde3ec"></div>
<div style="left:307px;top:245px;width:1px;height:147px;background:rgba(205,212,228,0.65)"></div>
<div style="left:349px;top:226px;width:1px;height:18px;background:#dde3ec"></div>
<div style="left:349px;top:245px;width:1px;height:147px;background:rgba(205,212,228,0.65)"></div>
<div style="left:390px;top:226px;width:1px;height:18px;background:#dde3ec"></div>
<div style="left:390px;top:245px;width:1px;height:147px;background:rgba(205,212,228,0.65)"></div>
<div style="left:432px;top:226px;width:1px;height:18px;background:#dde3ec"></div>
<div style="left:432px;top:245px;width:1px;height:147px;background:rgba(205,212,228,0.65)"></div>
<div style="left:474px;top:226px;width:1px;height:18px;background:#dde3ec"></div>
<div style="left:474px;top:245px;width:1px;height:147px;background:rgba(205,212,228,0.65)"></div>
<div style="left:516px;top:226px;width:1px;height:18px;background:#dde3ec"></div>
<div style="left:516px;top:245px;width:1px;height:147px;background:rgba(205,212,228,0.65)"></div>
<div style="left:558px;top:226px;width:1px;height:18px;background:#dde3ec"></div>
<div style="left:558px;top:245px;width:1px;height:147px;background:rgba(205,212,228,0.65)"></div>
<div class="t" style="left:256.0px;width:60px;text-align:center;top:229.0px;line-height:14px;color:#3a4353;font-size:10px">Mid</div>
<div class="t" style="left:298.0px;width:60px;text-align:center;top:229.0px;line-height:14px;color:#3a4353;font-size:10px">Delta</div>
<div class="t" style="left:339.5px;width:60px;text-align:center;top:229.0px;line-height:14px;color:#3a4353;font-size:10px">Theta</div>
<div class="t" style="left:381.0px;width:60px;text-align:center;top:229.0px;line-height:14px;color:#3a4353;font-size:10px">Extrin...</div>
<div class="t" style="left:423.0px;width:60px;text-align:center;top:229.0px;line-height:14px;color:#3a4353;font-size:10px">OrigPr...</div>
<div class="t" style="left:465.0px;width:60px;text-align:center;top:229.0px;line-height:14px;color:#3a4353;font-size:10px">Model</div>
<div class="t" style="left:507.0px;width:60px;text-align:center;top:229.0px;line-height:14px;color:#3a4353;font-size:10px">Pos</div>
<div class="t" style="left:535.0px;width:60px;text-align:center;top:229.0px;line-height:14px;color:#3a4353;font-size:10px"></div>
<div style="left:266px;top:245px;width:306px;height:147px;overflow:hidden">
<div style="left:0px;top:14.75px;width:307px;height:1px;background:rgba(205,212,228,0.65)"></div>
<div class="t" style="right:266.50px;top:0.70px;line-height:15.75px;color:#e83c3c;font-size:10px">10.70</div>
<div class="t" style="right:224.50px;top:0.70px;line-height:15.75px;color:#1b1f28;font-size:10px">18.64</div>
<div class="t" style="right:183.50px;top:0.70px;line-height:15.75px;color:#1b1f28;font-size:10px">-2.17</div>
<div class="t" style="right:141.50px;top:0.70px;line-height:15.75px;color:#1b1f28;font-size:10px">10.70</div>
<div style="left:0px;top:30.50px;width:307px;height:1px;background:rgba(205,212,228,0.65)"></div>
<div class="t" style="right:266.50px;top:16.45px;line-height:15.75px;color:#2a8f2a;font-size:10px">11.90</div>
<div class="t" style="right:224.50px;top:16.45px;line-height:15.75px;color:#1b1f28;font-size:10px">20.12</div>
<div class="t" style="right:183.50px;top:16.45px;line-height:15.75px;color:#1b1f28;font-size:10px">-2.30</div>
<div class="t" style="right:141.50px;top:16.45px;line-height:15.75px;color:#1b1f28;font-size:10px">11.90</div>
<div style="left:0px;top:46.25px;width:307px;height:1px;background:rgba(205,212,228,0.65)"></div>
<div class="t" style="right:266.50px;top:32.20px;line-height:15.75px;color:#2a8f2a;font-size:10px">13.20</div>
<div class="t" style="right:224.50px;top:32.20px;line-height:15.75px;color:#1b1f28;font-size:10px">21.66</div>
<div class="t" style="right:183.50px;top:32.20px;line-height:15.75px;color:#1b1f28;font-size:10px">-2.43</div>
<div class="t" style="right:141.50px;top:32.20px;line-height:15.75px;color:#1b1f28;font-size:10px">13.20</div>
<div style="left:0px;top:62.00px;width:307px;height:1px;background:rgba(205,212,228,0.65)"></div>
<div class="t" style="right:266.50px;top:47.95px;line-height:15.75px;color:#e83c3c;font-size:10px">14.55</div>
<div class="t" style="right:224.50px;top:47.95px;line-height:15.75px;color:#1b1f28;font-size:10px">23.21</div>
<div class="t" style="right:183.50px;top:47.95px;line-height:15.75px;color:#1b1f28;font-size:10px">-2.55</div>
<div class="t" style="right:141.50px;top:47.95px;line-height:15.75px;color:#1b1f28;font-size:10px">14.55</div>
<div style="left:0px;top:77.75px;width:307px;height:1px;background:rgba(205,212,228,0.65)"></div>
<div class="t" style="right:266.50px;top:63.70px;line-height:15.75px;color:#e83c3c;font-size:10px">16.00</div>
<div class="t" style="right:224.50px;top:63.70px;line-height:15.75px;color:#1b1f28;font-size:10px">24.81</div>
<div class="t" style="right:183.50px;top:63.70px;line-height:15.75px;color:#1b1f28;font-size:10px">-2.67</div>
<div class="t" style="right:141.50px;top:63.70px;line-height:15.75px;color:#1b1f28;font-size:10px">16.00</div>
<div style="left:0px;top:93.50px;width:307px;height:1px;background:rgba(205,212,228,0.65)"></div>
<div class="t" style="right:266.50px;top:79.45px;line-height:15.75px;color:#2a8f2a;font-size:10px">17.60</div>
<div class="t" style="right:224.50px;top:79.45px;line-height:15.75px;color:#1b1f28;font-size:10px">26.46</div>
<div class="t" style="right:183.50px;top:79.45px;line-height:15.75px;color:#1b1f28;font-size:10px">-2.79</div>
<div class="t" style="right:141.50px;top:79.45px;line-height:15.75px;color:#1b1f28;font-size:10px">17.60</div>
<div style="left:0px;top:109.25px;width:307px;height:1px;background:rgba(205,212,228,0.65)"></div>
<div class="t" style="right:266.50px;top:95.20px;line-height:15.75px;color:#e83c3c;font-size:10px">19.25</div>
<div class="t" style="right:224.50px;top:95.20px;line-height:15.75px;color:#1b1f28;font-size:10px">28.12</div>
<div class="t" style="right:183.50px;top:95.20px;line-height:15.75px;color:#1b1f28;font-size:10px">-2.90</div>
<div class="t" style="right:141.50px;top:95.20px;line-height:15.75px;color:#1b1f28;font-size:10px">19.25</div>
<div style="left:0px;top:125.00px;width:307px;height:1px;background:rgba(205,212,228,0.65)"></div>
<div class="t" style="right:266.50px;top:110.95px;line-height:15.75px;color:#e83c3c;font-size:10px">21.05</div>
<div class="t" style="right:224.50px;top:110.95px;line-height:15.75px;color:#1b1f28;font-size:10px">29.83</div>
<div class="t" style="right:183.50px;top:110.95px;line-height:15.75px;color:#1b1f28;font-size:10px">-3.02</div>
<div class="t" style="right:141.50px;top:110.95px;line-height:15.75px;color:#1b1f28;font-size:10px">21.05</div>
<div style="left:0px;top:140.75px;width:307px;height:1px;background:rgba(205,212,228,0.65)"></div>
<div class="t" style="right:266.50px;top:126.70px;line-height:15.75px;color:#e83c3c;font-size:10px">22.90</div>
<div class="t" style="right:224.50px;top:126.70px;line-height:15.75px;color:#1b1f28;font-size:10px">31.53</div>
<div class="t" style="right:183.50px;top:126.70px;line-height:15.75px;color:#1b1f28;font-size:10px">-3.13</div>
<div class="t" style="right:141.50px;top:126.70px;line-height:15.75px;color:#1b1f28;font-size:10px">22.90</div>
<div style="left:0px;top:156.50px;width:307px;height:1px;background:rgba(205,212,228,0.65)"></div>
<div class="t" style="right:266.50px;top:142.45px;line-height:15.75px;color:#2a8f2a;font-size:10px">24.00</div>
<div class="t" style="right:224.50px;top:142.45px;line-height:15.75px;color:#1b1f28;font-size:10px">33.27</div>
<div class="t" style="right:183.50px;top:142.45px;line-height:15.75px;color:#1b1f28;font-size:10px">-3.23</div>
<div class="t" style="right:141.50px;top:142.45px;line-height:15.75px;color:#1b1f28;font-size:10px">24.00</div>
</div>
<div style="left:558px;top:245px;width:14px;height:147px;background:#d5dae5"></div>
<svg style="left:563px;top:249px;" width="7" height="5" viewBox="0 0 7 5"><path d="M0 4 L3 0.5 L6 4 Z" fill="#606878"/></svg>
<svg style="left:563px;top:384px;" width="7" height="5" viewBox="0 0 7 5"><path d="M0 0.5 L3 4 L6 0.5 Z" fill="#606878"/></svg>
<div style="left:562px;top:284px;width:8px;height:15px;background:#8c96a8"></div>
<svg style="left:230px;top:397.5px;" width="12" height="4" viewBox="0 0 12 4"><rect x="0" y="0" width="1" height="1" fill="#a8b0be"/><rect x="0" y="2" width="1" height="1" fill="#a8b0be"/><rect x="1" y="1" width="1" height="1" fill="#a8b0be"/><rect x="2" y="0" width="1" height="1" fill="#a8b0be"/><rect x="2" y="2" width="1" height="1" fill="#a8b0be"/><rect x="3" y="1" width="1" height="1" fill="#a8b0be"/><rect x="4" y="0" width="1" height="1" fill="#a8b0be"/><rect x="4" y="2" width="1" height="1" fill="#a8b0be"/><rect x="5" y="1" width="1" height="1" fill="#a8b0be"/><rect x="6" y="0" width="1" height="1" fill="#a8b0be"/><rect x="6" y="2" width="1" height="1" fill="#a8b0be"/><rect x="7" y="1" width="1" height="1" fill="#a8b0be"/><rect x="8" y="0" width="1" height="1" fill="#a8b0be"/><rect x="8" y="2" width="1" height="1" fill="#a8b0be"/><rect x="9" y="1" width="1" height="1" fill="#a8b0be"/><rect x="10" y="0" width="1" height="1" fill="#a8b0be"/><rect x="10" y="2" width="1" height="1" fill="#a8b0be"/><rect x="11" y="1" width="1" height="1" fill="#a8b0be"/></svg>
<svg style="left:578px;top:399px;" width="4" height="12" viewBox="0 0 4 12"><rect x="0" y="0" width="1" height="1" fill="#a8b0be"/><rect x="2" y="0" width="1" height="1" fill="#a8b0be"/><rect x="1" y="1" width="1" height="1" fill="#a8b0be"/><rect x="0" y="2" width="1" height="1" fill="#a8b0be"/><rect x="2" y="2" width="1" height="1" fill="#a8b0be"/><rect x="1" y="3" width="1" height="1" fill="#a8b0be"/><rect x="0" y="4" width="1" height="1" fill="#a8b0be"/><rect x="2" y="4" width="1" height="1" fill="#a8b0be"/><rect x="1" y="5" width="1" height="1" fill="#a8b0be"/><rect x="0" y="6" width="1" height="1" fill="#a8b0be"/><rect x="2" y="6" width="1" height="1" fill="#a8b0be"/><rect x="1" y="7" width="1" height="1" fill="#a8b0be"/><rect x="0" y="8" width="1" height="1" fill="#a8b0be"/><rect x="2" y="8" width="1" height="1" fill="#a8b0be"/><rect x="1" y="9" width="1" height="1" fill="#a8b0be"/><rect x="0" y="10" width="1" height="1" fill="#a8b0be"/><rect x="2" y="10" width="1" height="1" fill="#a8b0be"/><rect x="1" y="11" width="1" height="1" fill="#a8b0be"/></svg>
<div style="left:-4px;top:403px;width:267px;height:187px;border:1px solid #b0b9c8;box-sizing:border-box;background:#c6e5ea"></div>
<div style="left:-3px;top:403px;width:265px;height:18px;background:#f5f7fb"></div>
<div style="left:-3px;top:421px;width:265px;height:1px;background:#d8dee8"></div>
<div style="left:42px;top:403px;width:1px;height:18px;background:#dde3ec"></div>
<div style="left:42px;top:422px;width:1px;height:167px;background:rgba(205,212,228,0.65)"></div>
<div style="left:86px;top:403px;width:1px;height:18px;background:#dde3ec"></div>
<div style="left:86px;top:422px;width:1px;height:167px;background:rgba(205,212,228,0.65)"></div>
<div style="left:130px;top:403px;width:1px;height:18px;background:#dde3ec"></div>
<div style="left:130px;top:422px;width:1px;height:167px;background:rgba(205,212,228,0.65)"></div>
<div style="left:174px;top:403px;width:1px;height:18px;background:#dde3ec"></div>
<div style="left:174px;top:422px;width:1px;height:167px;background:rgba(205,212,228,0.65)"></div>
<div style="left:217px;top:403px;width:1px;height:18px;background:#dde3ec"></div>
<div style="left:217px;top:422px;width:1px;height:167px;background:rgba(205,212,228,0.65)"></div>
<div class="t" style="left:-9.0px;width:60px;text-align:center;top:406.0px;line-height:14px;color:#3a4353;font-size:10px">Delta</div>
<div class="t" style="left:34.0px;width:60px;text-align:center;top:406.0px;line-height:14px;color:#3a4353;font-size:10px">Theta</div>
<div class="t" style="left:78.0px;width:60px;text-align:center;top:406.0px;line-height:14px;color:#3a4353;font-size:10px">Extrin...</div>
<div class="t" style="left:122.0px;width:60px;text-align:center;top:406.0px;line-height:14px;color:#3a4353;font-size:10px">OrigPri...</div>
<div class="t" style="left:165.5px;width:60px;text-align:center;top:406.0px;line-height:14px;color:#3a4353;font-size:10px">Model</div>
<div class="t" style="left:209.5px;width:60px;text-align:center;top:406.0px;line-height:14px;color:#3a4353;font-size:10px">Pos</div>
<div style="left:-3px;top:422px;width:265px;height:167px;overflow:hidden">
<div style="left:0px;top:14.75px;width:266px;height:1px;background:rgba(205,212,228,0.65)"></div>
<div class="t" style="right:221.50px;top:0.70px;line-height:15.75px;color:#1b1f28;font-size:10px">-8.30</div>
<div class="t" style="right:177.50px;top:0.70px;line-height:15.75px;color:#1b1f28;font-size:10px">-2.14</div>
<div class="t" style="right:133.50px;top:0.70px;line-height:15.75px;color:#1b1f28;font-size:10px">4.40</div>
<div class="t" style="right:89.50px;top:0.70px;line-height:15.75px;color:#1b1f28;font-size:10px">9.20</div>
<div class="t" style="right:1.50px;top:0.70px;line-height:15.75px;color:#1b1f28;font-size:10px">-1</div>
<div style="left:0px;top:30.50px;width:266px;height:1px;background:rgba(205,212,228,0.65)"></div>
<div class="t" style="right:221.50px;top:16.45px;line-height:15.75px;color:#1b1f28;font-size:10px">-7.84</div>
<div class="t" style="right:177.50px;top:16.45px;line-height:15.75px;color:#1b1f28;font-size:10px">-2.07</div>
<div class="t" style="right:133.50px;top:16.45px;line-height:15.75px;color:#1b1f28;font-size:10px">4.15</div>
<div style="left:0px;top:46.25px;width:266px;height:1px;background:rgba(205,212,228,0.65)"></div>
<div class="t" style="right:221.50px;top:32.20px;line-height:15.75px;color:#1b1f28;font-size:10px">-7.38</div>
<div class="t" style="right:177.50px;top:32.20px;line-height:15.75px;color:#1b1f28;font-size:10px">-2.00</div>
<div class="t" style="right:133.50px;top:32.20px;line-height:15.75px;color:#1b1f28;font-size:10px">3.90</div>
<div style="left:0px;top:62.00px;width:266px;height:1px;background:rgba(205,212,228,0.65)"></div>
<div class="t" style="right:221.50px;top:47.95px;line-height:15.75px;color:#1b1f28;font-size:10px">-7.00</div>
<div class="t" style="right:177.50px;top:47.95px;line-height:15.75px;color:#1b1f28;font-size:10px">-1.94</div>
<div class="t" style="right:133.50px;top:47.95px;line-height:15.75px;color:#1b1f28;font-size:10px">3.70</div>
<div style="left:0px;top:77.75px;width:266px;height:1px;background:rgba(205,212,228,0.65)"></div>
<div class="t" style="right:221.50px;top:63.70px;line-height:15.75px;color:#1b1f28;font-size:10px">-6.62</div>
<div class="t" style="right:177.50px;top:63.70px;line-height:15.75px;color:#1b1f28;font-size:10px">-1.88</div>
<div class="t" style="right:133.50px;top:63.70px;line-height:15.75px;color:#1b1f28;font-size:10px">3.50</div>
<div style="left:0px;top:93.50px;width:266px;height:1px;background:rgba(205,212,228,0.65)"></div>
<div class="t" style="right:221.50px;top:79.45px;line-height:15.75px;color:#1b1f28;font-size:10px">-6.25</div>
<div class="t" style="right:177.50px;top:79.45px;line-height:15.75px;color:#1b1f28;font-size:10px">-1.81</div>
<div class="t" style="right:133.50px;top:79.45px;line-height:15.75px;color:#1b1f28;font-size:10px">3.30</div>
<div style="left:0px;top:109.25px;width:266px;height:1px;background:rgba(205,212,228,0.65)"></div>
<div class="t" style="right:221.50px;top:95.20px;line-height:15.75px;color:#1b1f28;font-size:10px">-5.88</div>
<div class="t" style="right:177.50px;top:95.20px;line-height:15.75px;color:#1b1f28;font-size:10px">-1.74</div>
<div class="t" style="right:133.50px;top:95.20px;line-height:15.75px;color:#1b1f28;font-size:10px">3.10</div>
<div style="left:0px;top:125.00px;width:266px;height:1px;background:rgba(205,212,228,0.65)"></div>
<div class="t" style="right:221.50px;top:110.95px;line-height:15.75px;color:#1b1f28;font-size:10px">-5.56</div>
<div class="t" style="right:177.50px;top:110.95px;line-height:15.75px;color:#1b1f28;font-size:10px">-1.68</div>
<div class="t" style="right:133.50px;top:110.95px;line-height:15.75px;color:#1b1f28;font-size:10px">2.92</div>
<div style="left:0px;top:140.75px;width:266px;height:1px;background:rgba(205,212,228,0.65)"></div>
<div class="t" style="right:221.50px;top:126.70px;line-height:15.75px;color:#1b1f28;font-size:10px">-5.27</div>
<div class="t" style="right:177.50px;top:126.70px;line-height:15.75px;color:#1b1f28;font-size:10px">-1.63</div>
<div class="t" style="right:133.50px;top:126.70px;line-height:15.75px;color:#1b1f28;font-size:10px">2.78</div>
<div style="left:0px;top:156.50px;width:266px;height:1px;background:rgba(205,212,228,0.65)"></div>
<div class="t" style="right:221.50px;top:142.45px;line-height:15.75px;color:#1b1f28;font-size:10px">-4.98</div>
<div class="t" style="right:177.50px;top:142.45px;line-height:15.75px;color:#1b1f28;font-size:10px">-1.57</div>
<div class="t" style="right:133.50px;top:142.45px;line-height:15.75px;color:#1b1f28;font-size:10px">2.63</div>
<div style="left:0px;top:172.25px;width:266px;height:1px;background:rgba(205,212,228,0.65)"></div>
<div class="t" style="right:221.50px;top:158.20px;line-height:15.75px;color:#1b1f28;font-size:10px">-4.74</div>
<div class="t" style="right:177.50px;top:158.20px;line-height:15.75px;color:#1b1f28;font-size:10px">-1.52</div>
<div class="t" style="right:133.50px;top:158.20px;line-height:15.75px;color:#1b1f28;font-size:10px">2.50</div>
</div>
<div style="left:265px;top:403px;width:308px;height:187px;border:1px solid #b0b9c8;box-sizing:border-box;background:#c6e5ea"></div>
<div style="left:266px;top:403px;width:306px;height:18px;background:#f5f7fb"></div>
<div style="left:266px;top:421px;width:306px;height:1px;background:#d8dee8"></div>
<div style="left:307px;top:403px;width:1px;height:18px;background:#dde3ec"></div>
<div style="left:307px;top:422px;width:1px;height:167px;background:rgba(205,212,228,0.65)"></div>
<div style="left:349px;top:403px;width:1px;height:18px;background:#dde3ec"></div>
<div style="left:349px;top:422px;width:1px;height:167px;background:rgba(205,212,228,0.65)"></div>
<div style="left:390px;top:403px;width:1px;height:18px;background:#dde3ec"></div>
<div style="left:390px;top:422px;width:1px;height:167px;background:rgba(205,212,228,0.65)"></div>
<div style="left:432px;top:403px;width:1px;height:18px;background:#dde3ec"></div>
<div style="left:432px;top:422px;width:1px;height:167px;background:rgba(205,212,228,0.65)"></div>
<div style="left:474px;top:403px;width:1px;height:18px;background:#dde3ec"></div>
<div style="left:474px;top:422px;width:1px;height:167px;background:rgba(205,212,228,0.65)"></div>
<div style="left:516px;top:403px;width:1px;height:18px;background:#dde3ec"></div>
<div style="left:516px;top:422px;width:1px;height:167px;background:rgba(205,212,228,0.65)"></div>
<div style="left:558px;top:403px;width:1px;height:18px;background:#dde3ec"></div>
<div style="left:558px;top:422px;width:1px;height:167px;background:rgba(205,212,228,0.65)"></div>
<div class="t" style="left:256.0px;width:60px;text-align:center;top:406.0px;line-height:14px;color:#3a4353;font-size:10px">Mid</div>
<div class="t" style="left:298.0px;width:60px;text-align:center;top:406.0px;line-height:14px;color:#3a4353;font-size:10px">Delta</div>
<div class="t" style="left:339.5px;width:60px;text-align:center;top:406.0px;line-height:14px;color:#3a4353;font-size:10px">Theta</div>
<div class="t" style="left:381.0px;width:60px;text-align:center;top:406.0px;line-height:14px;color:#3a4353;font-size:10px">Extrin...</div>
<div class="t" style="left:423.0px;width:60px;text-align:center;top:406.0px;line-height:14px;color:#3a4353;font-size:10px">OrigPr...</div>
<div class="t" style="left:465.0px;width:60px;text-align:center;top:406.0px;line-height:14px;color:#3a4353;font-size:10px">Model</div>
<div class="t" style="left:507.0px;width:60px;text-align:center;top:406.0px;line-height:14px;color:#3a4353;font-size:10px">Pos</div>
<div class="t" style="left:535.0px;width:60px;text-align:center;top:406.0px;line-height:14px;color:#3a4353;font-size:10px"></div>
<div style="left:266px;top:422px;width:306px;height:167px;overflow:hidden">
<div style="left:0px;top:14.75px;width:307px;height:1px;background:rgba(205,212,228,0.65)"></div>
<div class="t" style="right:266.50px;top:0.70px;line-height:15.75px;color:#e83c3c;font-size:10px">6.00</div>
<div class="t" style="right:224.50px;top:0.70px;line-height:15.75px;color:#1b1f28;font-size:10px">-9.96</div>
<div class="t" style="right:183.50px;top:0.70px;line-height:15.75px;color:#1b1f28;font-size:10px">-1.50</div>
<div class="t" style="right:141.50px;top:0.70px;line-height:15.75px;color:#1b1f28;font-size:10px">6.00</div>
<div style="left:0px;top:30.50px;width:307px;height:1px;background:rgba(205,212,228,0.65)"></div>
<div class="t" style="right:266.50px;top:16.45px;line-height:15.75px;color:#2a8f2a;font-size:10px">5.70</div>
<div class="t" style="right:224.50px;top:16.45px;line-height:15.75px;color:#1b1f28;font-size:10px">-9.47</div>
<div class="t" style="right:183.50px;top:16.45px;line-height:15.75px;color:#1b1f28;font-size:10px">-1.46</div>
<div class="t" style="right:141.50px;top:16.45px;line-height:15.75px;color:#1b1f28;font-size:10px">5.70</div>
<div style="left:0px;top:46.25px;width:307px;height:1px;background:rgba(205,212,228,0.65)"></div>
<div class="t" style="right:266.50px;top:32.20px;line-height:15.75px;color:#e83c3c;font-size:10px">5.40</div>
<div class="t" style="right:224.50px;top:32.20px;line-height:15.75px;color:#1b1f28;font-size:10px">-8.98</div>
<div class="t" style="right:183.50px;top:32.20px;line-height:15.75px;color:#1b1f28;font-size:10px">-1.42</div>
<div class="t" style="right:141.50px;top:32.20px;line-height:15.75px;color:#1b1f28;font-size:10px">5.40</div>
<div style="left:0px;top:62.00px;width:307px;height:1px;background:rgba(205,212,228,0.65)"></div>
<div class="t" style="right:266.50px;top:47.95px;line-height:15.75px;color:#e83c3c;font-size:10px">5.10</div>
<div class="t" style="right:224.50px;top:47.95px;line-height:15.75px;color:#1b1f28;font-size:10px">-8.51</div>
<div class="t" style="right:183.50px;top:47.95px;line-height:15.75px;color:#1b1f28;font-size:10px">-1.38</div>
<div class="t" style="right:141.50px;top:47.95px;line-height:15.75px;color:#1b1f28;font-size:10px">5.10</div>
<div style="left:0px;top:77.75px;width:307px;height:1px;background:rgba(205,212,228,0.65)"></div>
<div class="t" style="right:266.50px;top:63.70px;line-height:15.75px;color:#e83c3c;font-size:10px">4.90</div>
<div class="t" style="right:224.50px;top:63.70px;line-height:15.75px;color:#1b1f28;font-size:10px">-8.15</div>
<div class="t" style="right:183.50px;top:63.70px;line-height:15.75px;color:#1b1f28;font-size:10px">-1.35</div>
<div class="t" style="right:141.50px;top:63.70px;line-height:15.75px;color:#1b1f28;font-size:10px">4.90</div>
<div style="left:0px;top:93.50px;width:307px;height:1px;background:rgba(205,212,228,0.65)"></div>
<div class="t" style="right:266.50px;top:79.45px;line-height:15.75px;color:#e83c3c;font-size:10px">4.60</div>
<div class="t" style="right:224.50px;top:79.45px;line-height:15.75px;color:#1b1f28;font-size:10px">-7.69</div>
<div class="t" style="right:183.50px;top:79.45px;line-height:15.75px;color:#1b1f28;font-size:10px">-1.30</div>
<div class="t" style="right:141.50px;top:79.45px;line-height:15.75px;color:#1b1f28;font-size:10px">4.60</div>
<div style="left:0px;top:109.25px;width:307px;height:1px;background:rgba(205,212,228,0.65)"></div>
<div class="t" style="right:266.50px;top:95.20px;line-height:15.75px;color:#e83c3c;font-size:10px">4.40</div>
<div class="t" style="right:224.50px;top:95.20px;line-height:15.75px;color:#1b1f28;font-size:10px">-7.34</div>
<div class="t" style="right:183.50px;top:95.20px;line-height:15.75px;color:#1b1f28;font-size:10px">-1.27</div>
<div class="t" style="right:141.50px;top:95.20px;line-height:15.75px;color:#1b1f28;font-size:10px">4.40</div>
<div style="left:0px;top:125.00px;width:307px;height:1px;background:rgba(205,212,228,0.65)"></div>
<div class="t" style="right:266.50px;top:110.95px;line-height:15.75px;color:#e83c3c;font-size:10px">4.20</div>
<div class="t" style="right:224.50px;top:110.95px;line-height:15.75px;color:#1b1f28;font-size:10px">-7.00</div>
<div class="t" style="right:183.50px;top:110.95px;line-height:15.75px;color:#1b1f28;font-size:10px">-1.24</div>
<div class="t" style="right:141.50px;top:110.95px;line-height:15.75px;color:#1b1f28;font-size:10px">4.20</div>
<div style="left:0px;top:140.75px;width:307px;height:1px;background:rgba(205,212,228,0.65)"></div>
<div class="t" style="right:266.50px;top:126.70px;line-height:15.75px;color:#2a8f2a;font-size:10px">4.00</div>
<div class="t" style="right:224.50px;top:126.70px;line-height:15.75px;color:#1b1f28;font-size:10px">-6.67</div>
<div class="t" style="right:183.50px;top:126.70px;line-height:15.75px;color:#1b1f28;font-size:10px">-1.20</div>
<div class="t" style="right:141.50px;top:126.70px;line-height:15.75px;color:#1b1f28;font-size:10px">4.00</div>
<div style="left:0px;top:156.50px;width:307px;height:1px;background:rgba(205,212,228,0.65)"></div>
<div class="t" style="right:266.50px;top:142.45px;line-height:15.75px;color:#e83c3c;font-size:10px">3.80</div>
<div class="t" style="right:224.50px;top:142.45px;line-height:15.75px;color:#1b1f28;font-size:10px">-6.34</div>
<div class="t" style="right:183.50px;top:142.45px;line-height:15.75px;color:#1b1f28;font-size:10px">-1.17</div>
<div class="t" style="right:141.50px;top:142.45px;line-height:15.75px;color:#1b1f28;font-size:10px">3.80</div>
<div style="left:0px;top:172.25px;width:307px;height:1px;background:rgba(205,212,228,0.65)"></div>
<div class="t" style="right:266.50px;top:158.20px;line-height:15.75px;color:#e83c3c;font-size:10px">3.60</div>
<div class="t" style="right:224.50px;top:158.20px;line-height:15.75px;color:#1b1f28;font-size:10px">-6.02</div>
<div class="t" style="right:183.50px;top:158.20px;line-height:15.75px;color:#1b1f28;font-size:10px">-1.13</div>
<div class="t" style="right:141.50px;top:158.20px;line-height:15.75px;color:#1b1f28;font-size:10px">3.60</div>
</div>
<div style="left:558px;top:422px;width:14px;height:167px;background:#d5dae5"></div>
<svg style="left:563px;top:426px;" width="7" height="5" viewBox="0 0 7 5"><path d="M0 4 L3 0.5 L6 4 Z" fill="#606878"/></svg>
<svg style="left:563px;top:581px;" width="7" height="5" viewBox="0 0 7 5"><path d="M0 0.5 L3 4 L6 0.5 Z" fill="#606878"/></svg>
<div style="left:562px;top:478px;width:8px;height:14px;background:#8c96a8"></div>
<svg style="left:230px;top:595px;" width="12" height="4" viewBox="0 0 12 4"><rect x="0" y="0" width="1" height="1" fill="#a8b0be"/><rect x="0" y="2" width="1" height="1" fill="#a8b0be"/><rect x="1" y="1" width="1" height="1" fill="#a8b0be"/><rect x="2" y="0" width="1" height="1" fill="#a8b0be"/><rect x="2" y="2" width="1" height="1" fill="#a8b0be"/><rect x="3" y="1" width="1" height="1" fill="#a8b0be"/><rect x="4" y="0" width="1" height="1" fill="#a8b0be"/><rect x="4" y="2" width="1" height="1" fill="#a8b0be"/><rect x="5" y="1" width="1" height="1" fill="#a8b0be"/><rect x="6" y="0" width="1" height="1" fill="#a8b0be"/><rect x="6" y="2" width="1" height="1" fill="#a8b0be"/><rect x="7" y="1" width="1" height="1" fill="#a8b0be"/><rect x="8" y="0" width="1" height="1" fill="#a8b0be"/><rect x="8" y="2" width="1" height="1" fill="#a8b0be"/><rect x="9" y="1" width="1" height="1" fill="#a8b0be"/><rect x="10" y="0" width="1" height="1" fill="#a8b0be"/><rect x="10" y="2" width="1" height="1" fill="#a8b0be"/><rect x="11" y="1" width="1" height="1" fill="#a8b0be"/></svg>
<div style="left:0px;top:600px;width:583px;height:1px;background:#dde2ec"></div>
<div style="left:0px;top:601px;width:583px;height:21px;background:#ced5e3"></div>
<div style="left:0px;top:602.8px;width:102.5px;height:15.7px;background:#fff;border:1px solid #b4bccb;box-sizing:border-box"></div>
<div class="t" style="left:-23px;top:604.7px;line-height:14px;color:#1b1f28;font-size:10px">Combined</div>
<svg style="left:93px;top:609px;" width="7" height="4" viewBox="0 0 7 4"><path d="M0 0 h6 l-3 3 z" fill="#606878"/></svg>
<div style="left:109.6px;top:602.8px;width:68px;height:15.7px;background:#fff;border:1px solid #b4bccb;box-sizing:border-box"></div>
<div class="t" style="left:112.5px;top:604.7px;line-height:14px;color:#1b1f28;font-size:10px">Auto</div>
<svg style="left:168px;top:609px;" width="7" height="4" viewBox="0 0 7 4"><path d="M0 0 h6 l-3 3 z" fill="#606878"/></svg>
<div style="left:456.5px;top:605.5px;width:8.5px;height:8.5px;background:#fff;border:1px solid #98a2b4;box-sizing:border-box"></div>
<div class="t" style="left:468.5px;top:604.0px;line-height:14px;color:#3a4353;font-size:10.5px">Ignore Today's Trades</div>
<div style="left:0px;top:621px;width:574px;height:18px;background:#f5f7fb"></div>
<div style="left:0px;top:639px;width:574px;height:32px;background:#fff"></div>
<div style="left:0px;top:621px;width:575px;height:1px;background:#c0c8d6"></div>
<div style="left:0px;top:639px;width:575px;height:1px;background:#dde2ea"></div>
<div style="left:0px;top:655px;width:575px;height:1px;background:#dde2ea"></div>
<div style="left:1px;top:621px;width:1px;height:50px;background:#d4dae4"></div>
<div style="left:53px;top:621px;width:1px;height:50px;background:#d4dae4"></div>
<div style="left:105px;top:621px;width:1px;height:50px;background:#d4dae4"></div>
<div style="left:157px;top:621px;width:1px;height:50px;background:#d4dae4"></div>
<div style="left:209px;top:621px;width:1px;height:50px;background:#d4dae4"></div>
<div style="left:261px;top:621px;width:1px;height:50px;background:#d4dae4"></div>
<div style="left:313px;top:621px;width:1px;height:50px;background:#d4dae4"></div>
<div style="left:365px;top:621px;width:1px;height:50px;background:#d4dae4"></div>
<div style="left:417px;top:621px;width:1px;height:50px;background:#d4dae4"></div>
<div style="left:469px;top:621px;width:1px;height:50px;background:#d4dae4"></div>
<div style="left:521px;top:621px;width:1px;height:50px;background:#d4dae4"></div>
<div style="left:574px;top:621px;width:1px;height:51px;background:#b8c0ce"></div>
<div class="t" style="left:-3.0px;width:60px;text-align:center;top:624.8px;line-height:14px;color:#3a4353;font-size:10px">Cost</div>
<div class="t" style="left:49.0px;width:60px;text-align:center;top:624.8px;line-height:14px;color:#3a4353;font-size:10px">Curr Cost</div>
<div class="t" style="left:101.0px;width:60px;text-align:center;top:624.8px;line-height:14px;color:#3a4353;font-size:10px">Commis...</div>
<div class="t" style="left:153.0px;width:60px;text-align:center;top:624.8px;line-height:14px;color:#3a4353;font-size:10px">PnL</div>
<div class="t" style="left:205.0px;width:60px;text-align:center;top:624.8px;line-height:14px;color:#3a4353;font-size:10px">PnL%</div>
<div class="t" style="left:257.0px;width:60px;text-align:center;top:624.8px;line-height:14px;color:#3a4353;font-size:10px">Delta</div>
<div class="t" style="left:309.0px;width:60px;text-align:center;top:624.8px;line-height:14px;color:#3a4353;font-size:10px">Gamma</div>
<div class="t" style="left:361.0px;width:60px;text-align:center;top:624.8px;line-height:14px;color:#3a4353;font-size:10px">Theta</div>
<div class="t" style="left:413.0px;width:60px;text-align:center;top:624.8px;line-height:14px;color:#3a4353;font-size:10px">Vega</div>
<div class="t" style="left:465.0px;width:60px;text-align:center;top:624.8px;line-height:14px;color:#3a4353;font-size:10px">T/D</div>
<div class="t" style="left:517.5px;width:60px;text-align:center;top:624.8px;line-height:14px;color:#3a4353;font-size:10px">Plot</div>
<div class="t" style="right:1028.6px;top:642.0px;line-height:14px;color:#1b1f28;font-size:10px">1,438.60</div>
<div class="t" style="right:976.6px;top:642.0px;line-height:14px;color:#1b1f28;font-size:10px">-1,300.00</div>
<div class="t" style="right:924.6px;top:642.0px;line-height:14px;color:#1b1f28;font-size:10px">1.40</div>
<div class="t" style="right:872.6px;top:642.0px;line-height:14px;color:#2a8f2a;font-size:10px">138.60</div>
<div class="t" style="right:820.6px;top:642.0px;line-height:14px;color:#2a8f2a;font-size:10px">0.12%</div>
<div class="t" style="right:768.6px;top:642.0px;line-height:14px;color:#1b1f28;font-size:10px">-8.18</div>
<div class="t" style="right:716.6px;top:642.0px;line-height:14px;color:#1b1f28;font-size:10px">-0.38</div>
<div class="t" style="right:664.6px;top:642.0px;line-height:14px;color:#1b1f28;font-size:10px">534.29</div>
<div class="t" style="right:612.6px;top:642.0px;line-height:14px;color:#1b1f28;font-size:10px">-268.02</div>
<div class="t" style="right:560.6px;top:642.0px;line-height:14px;color:#1b1f28;font-size:10px">65.3</div>
<svg style="left:544px;top:643.1px;" width="9" height="9" viewBox="0 0 9 9"><rect x="0.5" y="0.5" width="8" height="8" fill="#fff" stroke="#a8b0c0"/><path d="M2 4.5 L3.8 6.5 L7.2 2.2" fill="none" stroke="#505a6a" stroke-width="1.2"/></svg>
<div class="t" style="right:768.6px;top:657.6px;line-height:14px;color:#1b1f28;font-size:10px">0.00</div>
<div class="t" style="right:716.6px;top:657.6px;line-height:14px;color:#1b1f28;font-size:10px">0.00</div>
<div class="t" style="right:664.6px;top:657.6px;line-height:14px;color:#1b1f28;font-size:10px">0.00</div>
<div class="t" style="right:612.6px;top:657.6px;line-height:14px;color:#1b1f28;font-size:10px">0.00</div>
<div class="t" style="right:560.6px;top:657.6px;line-height:14px;color:#1b1f28;font-size:10px">0</div>
<svg style="left:544px;top:658.7px;" width="9" height="9" viewBox="0 0 9 9"><rect x="0.5" y="0.5" width="8" height="8" fill="#fff" stroke="#a8b0c0"/><path d="M2 4.5 L3.8 6.5 L7.2 2.2" fill="none" stroke="#505a6a" stroke-width="1.2"/></svg>
<div style="left:0px;top:672.5px;width:585px;height:2.5px;background:#7a8294"></div>
<div style="left:585px;top:672.5px;width:495px;height:2.5px;background:#7a8294"></div>
<div style="left:585px;top:137px;width:495px;height:45px;background:#d4dae8"></div>
<div style="left:583px;top:137px;width:2px;height:514px;background:#cdd3df"></div>
<div style="left:585px;top:137px;width:1px;height:514px;background:#bcc4d2"></div>
<div style="left:585px;top:160px;width:495px;height:1px;background:#b0b9ca"></div>
<div style="left:585.5px;top:138.4px;width:63.799999999999955px;height:22.6px;background:#d4dae8;border-top:1px solid #b0b9ca;border-right:1px solid #b0b9ca;box-sizing:border-box"></div>
<div class="t" style="left:547.4px;width:140px;text-align:center;top:142.2px;line-height:14px;color:#2b3648;font-size:9.9px">Risk Chart</div>
<div style="left:649.3px;top:138.4px;width:67.10000000000002px;height:21.7px;background:#cdd4e2;border:1px solid #b0b9ca;border-left:none;box-sizing:border-box"></div>
<div class="t" style="left:612.85px;width:140px;text-align:center;top:142.2px;line-height:14px;color:#2b3648;font-size:9.9px">Price Chart</div>
<div style="left:716.4px;top:138.4px;width:104.89999999999998px;height:21.7px;background:#cdd4e2;border:1px solid #b0b9ca;border-left:none;box-sizing:border-box"></div>
<div class="t" style="left:698.85px;width:140px;text-align:center;top:142.2px;line-height:14px;color:#2b3648;font-size:9.9px">Movement Analysis</div>
<div style="left:821.3px;top:138.4px;width:54.200000000000045px;height:21.7px;background:#cdd4e2;border:1px solid #b0b9ca;border-left:none;box-sizing:border-box"></div>
<div class="t" style="left:778.4px;width:140px;text-align:center;top:142.2px;line-height:14px;color:#2b3648;font-size:9.9px">Volatility</div>
<div style="left:875.5px;top:138.4px;width:133.20000000000005px;height:21.7px;background:#cdd4e2;border:1px solid #b0b9ca;border-left:none;box-sizing:border-box"></div>
<div class="t" style="left:872.1px;width:140px;text-align:center;top:142.2px;line-height:14px;color:#2b3648;font-size:9.9px">Statistics &amp; Fundamentals</div>
<div style="left:586px;top:160px;width:64px;height:1.5px;background:#d4dae8"></div>
<div class="t" style="left:590.5px;top:165.2px;line-height:14px;color:#2b3648;font-size:9.9px">Vol Adjust</div>
<div style="left:639.3px;top:163.7px;width:44.2px;height:15.1px;background:#fff;border:1px solid #c0c8d6;box-sizing:border-box"></div>
<div class="t" style="right:413px;top:165.2px;line-height:14px;color:#1b1f28;font-size:10px">0</div>
<svg style="left:674px;top:165px;" width="7" height="12" viewBox="0 0 7 12"><path d="M0.5 4 L3.5 1 L6.5 4 Z M0.5 8 L3.5 11 L6.5 8 Z" fill="#606878"/></svg>
<div class="t" style="left:985px;top:164.4px;line-height:14px;color:#2b3648;font-size:9.5px">Projection</div>
<div style="left:1032px;top:163px;width:60px;height:16.5px;background:#fff;border:1px solid #c0c8d6;box-sizing:border-box"></div>
<div class="t" style="left:1035px;top:165.2px;line-height:14px;color:#1b1f28;font-size:10px">28/07/2025</div>
<div style="left:586px;top:181.8px;width:494px;height:469px;background:#fff"></div>
<svg style="left:0px;top:0px;font-family:"Liberation Sans",sans-serif;pointer-events:none" width="1080" height="675" viewBox="0 0 1080 675"><line x1="632.5" y1="197.2" x2="1080" y2="197.2" stroke="#e2e4e8" stroke-width="1"/><line x1="632.5" y1="220.1" x2="1080" y2="220.1" stroke="#e2e4e8" stroke-width="1"/><line x1="632.5" y1="243.0" x2="1080" y2="243.0" stroke="#e2e4e8" stroke-width="1"/><line x1="632.5" y1="265.9" x2="1080" y2="265.9" stroke="#e2e4e8" stroke-width="1"/><line x1="632.5" y1="288.8" x2="1080" y2="288.8" stroke="#e2e4e8" stroke-width="1"/><line x1="632.5" y1="311.7" x2="1080" y2="311.7" stroke="#e2e4e8" stroke-width="1"/><line x1="632.5" y1="334.6" x2="1080" y2="334.6" stroke="#e2e4e8" stroke-width="1"/><line x1="632.5" y1="357.5" x2="1080" y2="357.5" stroke="#e2e4e8" stroke-width="1"/><line x1="632.5" y1="380.4" x2="1080" y2="380.4" stroke="#e2e4e8" stroke-width="1"/><line x1="632.5" y1="403.3" x2="1080" y2="403.3" stroke="#e2e4e8" stroke-width="1"/><line x1="632.5" y1="426.2" x2="1080" y2="426.2" stroke="#e2e4e8" stroke-width="1"/><line x1="632.5" y1="449.1" x2="1080" y2="449.1" stroke="#e2e4e8" stroke-width="1"/><line x1="632.5" y1="472.0" x2="1080" y2="472.0" stroke="#e2e4e8" stroke-width="1"/><line x1="645.8" y1="191.2" x2="645.8" y2="472" stroke="#e2e4e8" stroke-width="1"/><line x1="712.5" y1="191.2" x2="712.5" y2="472" stroke="#e2e4e8" stroke-width="1"/><line x1="779.2" y1="191.2" x2="779.2" y2="472" stroke="#e2e4e8" stroke-width="1"/><line x1="845.9" y1="191.2" x2="845.9" y2="472" stroke="#e2e4e8" stroke-width="1"/><line x1="912.6" y1="191.2" x2="912.6" y2="472" stroke="#e2e4e8" stroke-width="1"/><line x1="979.3" y1="191.2" x2="979.3" y2="472" stroke="#e2e4e8" stroke-width="1"/><line x1="1046.0" y1="191.2" x2="1046.0" y2="472" stroke="#e2e4e8" stroke-width="1"/><line x1="1112.7" y1="191.2" x2="1112.7" y2="472" stroke="#e2e4e8" stroke-width="1"/><rect x="853" y="197.2" width="220.79999999999995" height="274.8" fill="#91cbdb"/><rect x="908.2" y="197.2" width="110.59999999999991" height="274.8" fill="#4e80bc"/><g stroke="rgba(225,225,230,0.6)" stroke-width="1"><line x1="853" y1="220.1" x2="1073.8" y2="220.1"/><line x1="853" y1="243.0" x2="1073.8" y2="243.0"/><line x1="853" y1="265.9" x2="1073.8" y2="265.9"/><line x1="853" y1="288.8" x2="1073.8" y2="288.8"/><line x1="853" y1="311.7" x2="1073.8" y2="311.7"/><line x1="853" y1="334.6" x2="1073.8" y2="334.6"/><line x1="853" y1="357.5" x2="1073.8" y2="357.5"/><line x1="853" y1="380.4" x2="1073.8" y2="380.4"/><line x1="853" y1="403.3" x2="1073.8" y2="403.3"/><line x1="853" y1="426.2" x2="1073.8" y2="426.2"/><line x1="853" y1="449.1" x2="1073.8" y2="449.1"/><line x1="853" y1="472.0" x2="1073.8" y2="472.0"/><line x1="912.6" y1="197.2" x2="912.6" y2="472"/><line x1="979.3" y1="197.2" x2="979.3" y2="472"/><line x1="1046.0" y1="197.2" x2="1046.0" y2="472"/></g><line x1="632.5" y1="193.2" x2="632.5" y2="472" stroke="#d8dade"/><text x="626.5" y="200.8" text-anchor="end" font-size="8.7" fill="#303030">2%</text><text x="626.5" y="223.7" text-anchor="end" font-size="8.7" fill="#303030">1%</text><text x="626.5" y="246.6" text-anchor="end" font-size="8.7" fill="#303030">0%</text><text x="626.5" y="269.5" text-anchor="end" font-size="8.7" fill="#303030">-1%</text><text x="626.5" y="292.4" text-anchor="end" font-size="8.7" fill="#303030">-2%</text><text x="626.5" y="315.3" text-anchor="end" font-size="8.7" fill="#303030">-3%</text><text x="626.5" y="338.2" text-anchor="end" font-size="8.7" fill="#303030">-3%</text><text x="626.5" y="361.1" text-anchor="end" font-size="8.7" fill="#303030">-4%</text><text x="626.5" y="384.0" text-anchor="end" font-size="8.7" fill="#303030">-5%</text><text x="626.5" y="406.9" text-anchor="end" font-size="8.7" fill="#303030">-6%</text><text x="626.5" y="429.8" text-anchor="end" font-size="8.7" fill="#303030">-7%</text><text x="626.5" y="452.7" text-anchor="end" font-size="8.7" fill="#303030">-8%</text><text x="626.5" y="475.6" text-anchor="end" font-size="8.7" fill="#303030">-9%</text><text x="645.8" y="192.8" text-anchor="middle" font-size="8.6" fill="#303030">-3.7%</text><text x="712.5" y="192.8" text-anchor="middle" font-size="8.6" fill="#303030">-3.0%</text><text x="779.2" y="192.8" text-anchor="middle" font-size="8.6" fill="#303030">-2.2%</text><text x="845.9" y="192.8" text-anchor="middle" font-size="8.6" fill="#303030">-1.4%</text><text x="912.6" y="192.8" text-anchor="middle" font-size="8.6" fill="#303030">-0.6%</text><text x="979.3" y="192.8" text-anchor="middle" font-size="8.6" fill="#303030">0.2%</text><text x="1046.0" y="192.8" text-anchor="middle" font-size="8.6" fill="#303030">1.0%</text><text x="645.8" y="483.6" text-anchor="middle" font-size="8.6" fill="#303030">6150</text><text x="712.5" y="483.6" text-anchor="middle" font-size="8.6" fill="#303030">6200</text><text x="779.2" y="483.6" text-anchor="middle" font-size="8.6" fill="#303030">6250</text><text x="845.9" y="483.6" text-anchor="middle" font-size="8.6" fill="#303030">6300</text><text x="912.6" y="483.6" text-anchor="middle" font-size="8.6" fill="#303030">6350</text><text x="979.3" y="483.6" text-anchor="middle" font-size="8.6" fill="#303030">6400</text><text x="1046.0" y="483.6" text-anchor="middle" font-size="8.6" fill="#303030">6450</text><text transform="translate(863 231.7) rotate(-90) scale(0.86 1)" font-size="10" fill="#5f95cf">6306.15</text><text transform="translate(918 231.7) rotate(-90) scale(0.86 1)" font-size="10" fill="#a2bfe4">6347.39</text><text transform="translate(1018.5 231.7) rotate(-90) scale(0.86 1)" font-size="10" fill="#a2bfe4">6429.89</text><text transform="translate(1073.5 231.7) rotate(-90) scale(0.86 1)" font-size="10" fill="#5f95cf">6471.13</text><path d="M632.5 447.66 L634.5 444.97 L636.5 442.30 L638.5 439.64 L640.5 436.99 L642.5 434.35 L644.5 431.73 L646.5 429.12 L648.5 426.53 L650.5 423.95 L652.5 421.38 L654.5 418.83 L656.5 416.30 L658.5 413.77 L660.5 411.27 L662.5 408.77 L664.5 406.29 L666.5 403.83 L668.5 401.38 L670.5 398.95 L672.5 396.53 L674.5 394.13 L676.5 391.75 L678.5 389.38 L680.5 387.02 L682.5 384.69 L684.5 382.37 L686.5 380.06 L688.5 377.77 L690.5 375.50 L692.5 373.25 L694.5 371.01 L696.5 368.78 L698.5 366.58 L700.5 364.39 L702.5 362.22 L704.5 360.07 L706.5 357.93 L708.5 355.82 L710.5 353.72 L712.5 351.63 L714.5 349.57 L716.5 347.52 L718.5 345.49 L720.5 343.48 L722.5 341.49 L724.5 339.51 L726.5 337.55 L728.5 335.62 L730.5 333.70 L732.5 331.79 L734.5 329.91 L736.5 328.05 L738.5 326.20 L740.5 324.37 L742.5 322.56 L744.5 320.77 L746.5 319.00 L748.5 317.25 L750.5 315.52 L752.5 313.80 L754.5 312.11 L756.5 310.43 L758.5 308.77 L760.5 307.13 L762.5 305.51 L764.5 303.91 L766.5 302.33 L768.5 300.77 L770.5 299.23 L772.5 297.70 L774.5 296.20 L776.5 294.71 L778.5 293.25 L780.5 291.80 L782.5 290.37 L784.5 288.96 L786.5 287.57 L788.5 286.20 L790.5 284.85 L792.5 283.52 L794.5 282.21 L796.5 280.92 L798.5 279.64 L800.5 278.39 L802.5 277.15 L804.5 275.94 L806.5 274.74 L808.5 273.56 L810.5 272.40 L812.5 271.26 L814.5 270.14 L816.5 269.04 L818.5 267.96 L820.5 266.90 L822.5 265.85 L824.5 264.83 L826.5 263.82 L828.5 262.83 L830.5 261.87 L832.5 260.92 L834.5 259.99 L836.5 259.07 L838.5 258.18 L840.5 257.31 L842.5 256.45 L844.5 255.62 L846.5 254.80 L848.5 254.00 L850.5 253.22 L852.5 252.46 L854.5 251.71 L856.5 250.99 L858.5 250.28 L860.5 249.60 L862.5 248.93 L864.5 248.28 L866.5 247.65 L868.5 247.03 L870.5 246.44 L872.5 245.86 L874.5 245.31 L876.5 244.77 L878.5 244.25 L880.5 243.74 L882.5 243.26 L884.5 242.79 L886.5 242.35 L888.5 241.92 L890.5 241.51 L892.5 241.11 L894.5 240.74 L896.5 240.38 L898.5 240.05 L900.5 239.73 L902.5 239.43 L904.5 239.14 L906.5 238.88 L908.5 238.63 L910.5 238.40 L912.5 238.19 L914.5 238.00 L916.5 237.83 L918.5 237.68 L920.5 237.54 L922.5 237.42 L924.5 237.32 L926.5 237.24 L928.5 237.18 L930.5 237.13 L932.5 237.11 L934.5 237.10 L936.5 237.11 L938.5 237.14 L940.5 237.19 L942.5 237.26 L944.5 237.34 L946.5 237.44 L948.5 237.57 L950.5 237.71 L952.5 237.87 L954.5 238.05 L956.5 238.24 L958.5 238.46 L960.5 238.69 L962.5 238.95 L964.5 239.22 L966.5 239.51 L968.5 239.82 L970.5 240.15 L972.5 240.50 L974.5 240.87 L976.5 241.26 L978.5 241.66 L980.5 242.09 L982.5 242.53 L984.5 243.00 L986.5 243.48 L988.5 243.99 L990.5 244.51 L992.5 245.05 L994.5 245.61 L996.5 246.20 L998.5 246.80 L1000.5 247.42 L1002.5 248.06 L1004.5 248.72 L1006.5 249.40 L1008.5 250.10 L1010.5 250.82 L1012.5 251.56 L1014.5 252.32 L1016.5 253.11 L1018.5 253.91 L1020.5 254.73 L1022.5 255.57 L1024.5 256.43 L1026.5 257.31 L1028.5 258.22 L1030.5 259.14 L1032.5 260.08 L1034.5 261.05 L1036.5 262.03 L1038.5 263.04 L1040.5 264.06 L1042.5 265.11 L1044.5 266.18 L1046.5 267.26 L1048.5 268.37 L1050.5 269.50 L1052.5 270.65 L1054.5 271.82 L1056.5 273.01 L1058.5 274.22 L1060.5 275.46 L1062.5 276.71 L1064.5 277.98 L1066.5 279.28 L1068.5 280.59 L1070.5 281.93 L1072.5 283.29 L1074.5 284.67 L1076.5 286.07 L1078.5 287.49" fill="none" stroke="#7aa2f0" stroke-width="1.25"/><path d="M632.5 431.18 L634.5 428.22 L636.5 425.28 L638.5 422.34 L640.5 419.42 L642.5 416.52 L644.5 413.62 L646.5 410.75 L648.5 407.88 L650.5 405.03 L652.5 402.20 L654.5 399.38 L656.5 396.58 L658.5 393.79 L660.5 391.02 L662.5 388.26 L664.5 385.53 L666.5 382.81 L668.5 380.10 L670.5 377.42 L672.5 374.75 L674.5 372.10 L676.5 369.47 L678.5 366.86 L680.5 364.27 L682.5 361.70 L684.5 359.14 L686.5 356.61 L688.5 354.10 L690.5 351.61 L692.5 349.13 L694.5 346.68 L696.5 344.25 L698.5 341.84 L700.5 339.46 L702.5 337.09 L704.5 334.75 L706.5 332.43 L708.5 330.13 L710.5 327.86 L712.5 325.60 L714.5 323.37 L716.5 321.17 L718.5 318.98 L720.5 316.83 L722.5 314.69 L724.5 312.58 L726.5 310.49 L728.5 308.43 L730.5 306.39 L732.5 304.38 L734.5 302.39 L736.5 300.42 L738.5 298.48 L740.5 296.57 L742.5 294.68 L744.5 292.81 L746.5 290.97 L748.5 289.16 L750.5 287.37 L752.5 285.61 L754.5 283.87 L756.5 282.15 L758.5 280.47 L760.5 278.80 L762.5 277.17 L764.5 275.55 L766.5 273.97 L768.5 272.40 L770.5 270.87 L772.5 269.36 L774.5 267.87 L776.5 266.41 L778.5 264.97 L780.5 263.56 L782.5 262.18 L784.5 260.82 L786.5 259.48 L788.5 258.17 L790.5 256.88 L792.5 255.61 L794.5 254.37 L796.5 253.16 L798.5 251.97 L800.5 250.80 L802.5 249.65 L804.5 248.53 L806.5 247.43 L808.5 246.36 L810.5 245.31 L812.5 244.28 L814.5 243.27 L816.5 242.29 L818.5 241.32 L820.5 240.38 L822.5 239.46 L824.5 238.57 L826.5 237.69 L828.5 236.83 L830.5 236.00 L832.5 235.19 L834.5 234.39 L836.5 233.62 L838.5 232.87 L840.5 232.13 L842.5 231.42 L844.5 230.72 L846.5 230.05 L848.5 229.39 L850.5 228.75 L852.5 228.13 L854.5 227.53 L856.5 226.95 L858.5 226.38 L860.5 225.83 L862.5 225.30 L864.5 224.79 L866.5 224.29 L868.5 223.81 L870.5 223.34 L872.5 222.89 L874.5 222.46 L876.5 222.05 L878.5 221.65 L880.5 221.26 L882.5 220.89 L884.5 220.54 L886.5 220.20 L888.5 219.87 L890.5 219.56 L892.5 219.27 L894.5 218.99 L896.5 218.72 L898.5 218.47 L900.5 218.23 L902.5 218.01 L904.5 217.80 L906.5 217.60 L908.5 217.42 L910.5 217.25 L912.5 217.09 L914.5 216.95 L916.5 216.82 L918.5 216.71 L920.5 216.61 L922.5 216.52 L924.5 216.44 L926.5 216.38 L928.5 216.33 L930.5 216.29 L932.5 216.27 L934.5 216.26 L936.5 216.27 L938.5 216.28 L940.5 216.31 L942.5 216.36 L944.5 216.42 L946.5 216.49 L948.5 216.57 L950.5 216.67 L952.5 216.78 L954.5 216.91 L956.5 217.05 L958.5 217.20 L960.5 217.37 L962.5 217.56 L964.5 217.76 L966.5 217.97 L968.5 218.20 L970.5 218.44 L972.5 218.70 L974.5 218.97 L976.5 219.26 L978.5 219.57 L980.5 219.89 L982.5 220.22 L984.5 220.58 L986.5 220.95 L988.5 221.34 L990.5 221.74 L992.5 222.16 L994.5 222.60 L996.5 223.06 L998.5 223.53 L1000.5 224.03 L1002.5 224.54 L1004.5 225.07 L1006.5 225.62 L1008.5 226.19 L1010.5 226.77 L1012.5 227.38 L1014.5 228.01 L1016.5 228.66 L1018.5 229.33 L1020.5 230.02 L1022.5 230.73 L1024.5 231.46 L1026.5 232.21 L1028.5 232.99 L1030.5 233.78 L1032.5 234.60 L1034.5 235.44 L1036.5 236.31 L1038.5 237.19 L1040.5 238.10 L1042.5 239.04 L1044.5 239.99 L1046.5 240.98 L1048.5 241.98 L1050.5 243.01 L1052.5 244.06 L1054.5 245.14 L1056.5 246.24 L1058.5 247.37 L1060.5 248.52 L1062.5 249.70 L1064.5 250.91 L1066.5 252.14 L1068.5 253.39 L1070.5 254.67 L1072.5 255.98 L1074.5 257.31 L1076.5 258.67 L1078.5 260.06" fill="none" stroke="#ee5a5a" stroke-width="1.1"/><path d="M632.5 425.03 L634.5 421.64 L636.5 418.25 L638.5 414.85 L640.5 411.46 L642.5 408.07 L644.5 404.68 L646.5 401.28 L648.5 397.89 L650.5 394.50 L652.5 391.11 L654.5 387.71 L656.5 384.32 L658.5 380.93 L660.5 377.54 L662.5 374.14 L664.5 370.75 L666.5 367.36 L668.5 363.96 L670.5 360.57 L672.5 357.18 L674.5 353.79 L676.5 350.39 L678.5 347.00 L680.5 343.61 L682.5 340.22 L684.5 336.82 L686.5 333.43 L688.5 330.04 L690.5 326.65 L692.5 323.25 L694.5 319.86 L696.5 316.47 L698.5 313.08 L700.5 309.68 L702.5 306.29 L704.5 302.90 L706.5 299.51 L708.5 296.11 L710.5 292.72 L712.5 289.33 L714.5 285.94 L716.5 282.54 L718.5 279.15 L720.5 275.76 L722.5 272.37 L724.5 268.97 L726.5 265.58 L728.5 262.19 L730.5 258.80 L732.5 255.40 L734.5 252.01 L736.5 248.62 L738.5 245.23 L740.5 241.83 L742.5 238.44 L744.5 235.05 L746.5 231.66 L748.5 228.26 L750.5 224.87 L752.5 221.48 L754.5 218.09 L756.5 214.69 L758.5 211.30 L760.5 210.03 L762.5 210.03 L764.5 210.03 L766.5 210.03 L768.5 210.03 L770.5 210.03 L772.5 210.03 L774.5 210.03 L776.5 210.03 L778.5 210.03 L780.5 210.03 L782.5 210.03 L784.5 210.03 L786.5 210.03 L788.5 210.03 L790.5 210.03 L792.5 210.03 L794.5 210.03 L796.5 210.03 L798.5 210.03 L800.5 210.03 L802.5 210.03 L804.5 210.03 L806.5 210.03 L808.5 210.03 L810.5 210.03 L812.5 210.03 L814.5 210.03 L816.5 210.03 L818.5 210.03 L820.5 210.03 L822.5 210.03 L824.5 210.03 L826.5 210.03 L828.5 210.03 L830.5 210.03 L832.5 210.03 L834.5 210.03 L836.5 210.03 L838.5 210.03 L840.5 210.03 L842.5 210.03 L844.5 210.03 L846.5 210.03 L848.5 210.03 L850.5 210.03 L852.5 210.03 L854.5 210.03 L856.5 210.03 L858.5 210.03 L860.5 210.03 L862.5 210.03 L864.5 210.03 L866.5 210.03 L868.5 210.03 L870.5 210.03 L872.5 210.03 L874.5 210.03 L876.5 210.03 L878.5 210.03 L880.5 210.03 L882.5 210.03 L884.5 210.03 L886.5 210.03 L888.5 210.03 L890.5 210.03 L892.5 210.03 L894.5 210.03 L896.5 210.03 L898.5 210.03 L900.5 210.03 L902.5 210.03 L904.5 210.03 L906.5 210.03 L908.5 210.03 L910.5 210.03 L912.5 210.03 L914.5 210.03 L916.5 210.03 L918.5 210.03 L920.5 210.03 L922.5 210.03 L924.5 210.03 L926.5 210.03 L928.5 210.03 L930.5 210.03 L932.5 210.03 L934.5 210.03 L936.5 210.03 L938.5 210.03 L940.5 210.03 L942.5 210.03 L944.5 210.03 L946.5 210.03 L948.5 210.03 L950.5 210.03 L952.5 210.03 L954.5 210.03 L956.5 210.03 L958.5 210.03 L960.5 210.03 L962.5 210.03 L964.5 210.03 L966.5 210.03 L968.5 210.03 L970.5 210.03 L972.5 210.03 L974.5 210.03 L976.5 210.03 L978.5 210.03 L980.5 210.03 L982.5 210.03 L984.5 210.03 L986.5 210.03 L988.5 210.03 L990.5 210.03 L992.5 210.03 L994.5 210.03 L996.5 210.03 L998.5 210.03 L1000.5 210.03 L1002.5 210.03 L1004.5 210.03 L1006.5 210.03 L1008.5 210.03 L1010.5 210.03 L1012.5 210.03 L1014.5 210.03 L1016.5 210.03 L1018.5 210.03 L1020.5 210.03 L1022.5 210.03 L1024.5 210.03 L1026.5 210.03 L1028.5 210.03 L1030.5 210.03 L1032.5 210.03 L1034.5 210.03 L1036.5 210.03 L1038.5 210.03 L1040.5 210.03 L1042.5 210.03 L1044.5 210.03 L1046.5 210.03 L1048.5 210.03 L1050.5 210.03 L1052.5 210.03 L1054.5 210.03 L1056.5 210.03 L1058.5 210.03 L1060.5 210.03 L1062.5 210.03 L1064.5 210.03 L1066.5 210.03 L1068.5 210.03 L1070.5 210.03 L1072.5 210.03 L1074.5 210.03 L1076.5 210.03 L1078.5 210.03" fill="none" stroke="#4a4cc4" stroke-width="1.8"/><line x1="632.5" y1="242.9" x2="1080" y2="242.9" stroke="#303030" stroke-width="1.1"/><line x1="739.2" y1="197.2" x2="739.2" y2="472" stroke="#b050c0" stroke-width="1.2" stroke-dasharray="3,3"/><text transform="translate(738.4 469.4) rotate(-90) scale(0.86 1)" font-size="10" fill="#8a3aa8">6220.34</text><text x="686" y="464" text-anchor="middle" font-size="8.6" font-weight="bold" fill="#8a3aa8">1.7%</text><text x="929" y="464" text-anchor="middle" font-size="8.6" font-weight="bold" fill="#7838b0">89.8%</text><path d="M937.5 233.8 L972.5 237.2 L972.5 244.2 L937.5 240.8 Z" fill="#c09888" opacity="0.65"/><circle cx="963.3" cy="239.6" r="3.2" fill="#38c0a8" stroke="#1c2c3c" stroke-width="1"/><rect x="950.5" y="182.5" width="25.5" height="11" fill="#fff" stroke="#505868" stroke-width="1"/><text x="963.3" y="192" text-anchor="middle" font-size="9.5" fill="#303030">0.0%</text><rect x="591" y="233.3" width="38.3" height="10.7" fill="#008000"/><text x="626.5" y="246.5" text-anchor="end" font-size="9.5" fill="#303030">0%</text><text x="626.5" y="242.4" text-anchor="end" font-size="9.5" fill="#f0f0f0">0%</text><rect x="637.5" y="201.8" width="136.3" height="46.4" rx="3.5" fill="rgba(230,235,243,0.8)" stroke="#9aa6b8" stroke-width="1"/><rect x="643.6" y="208.6" width="2.7" height="10" fill="#e03030"/><rect x="643.6" y="220.4" width="2.7" height="10" fill="#7aa2f0"/><rect x="643.6" y="232.1" width="2.7" height="10" fill="#7aa2f0"/><text x="646.5" y="217.5" font-size="9" fill="#686868">-1.40 Realized PnL</text><text x="646.5" y="229" font-size="9" fill="#686868">-1 <tspan fill="#f06060">01ago. 6235 Put Δ</tspan></text><text x="646.5" y="240.7" font-size="9" fill="#686868">-1 <tspan fill="#f06060">01ago. 6490 Call Δ</tspan></text><text x="766.5" y="229" text-anchor="end" font-size="9" fill="#f06060">-8.30</text><text x="767.5" y="240.7" text-anchor="end" font-size="9" fill="#f06060">16.48</text><rect x="637.2" y="421.3" width="87" height="46.3" rx="3.5" fill="rgba(230,235,243,0.85)" stroke="#9aa6b8" stroke-width="1"/><text x="643.5" y="437" font-size="8.8" fill="#6a72d8">01/08/2025 (0)</text><text x="643.5" y="448.4" font-size="8.8" fill="#f06a6a">30/07/2025 (2) T+2</text><text x="643.5" y="459.5" font-size="8.8" fill="#8ab0f0">28/07/2025 (4) T+0</text><text x="686" y="464" text-anchor="middle" font-size="8.6" font-weight="bold" fill="#8a3aa8">1.7%</text></svg>
<svg style="left:0px;top:0px;font-family:"Liberation Sans",sans-serif;pointer-events:none" width="1080" height="675" viewBox="0 0 1080 675"><rect x="589.5" y="490" width="500" height="157" rx="4" fill="#e9eff7" stroke="#a8b0be" stroke-width="1"/><rect x="633.5" y="513.5" width="46.0" height="9" fill="#f07676" stroke="#606060" stroke-width="1"/><rect x="679.5" y="513.5" width="67.0" height="4" fill="#f07676" stroke="#606060" stroke-width="1"/><rect x="746.5" y="513.5" width="67.0" height="2" fill="#f07676" stroke="#606060" stroke-width="1"/><rect x="813.5" y="513.5" width="66.0" height="0" fill="#f07676" stroke="#606060" stroke-width="1"/><rect x="879.5" y="513.5" width="67.0" height="0" fill="#f07676" stroke="#606060" stroke-width="1"/><rect x="946.5" y="513.5" width="67.0" height="0" fill="#f07676" stroke="#606060" stroke-width="1"/><rect x="1013.5" y="513.5" width="66.0" height="1" fill="#f07676" stroke="#606060" stroke-width="1"/><rect x="633.5" y="540.5" width="46.0" height="9" fill="#5878f0" stroke="#606060" stroke-width="1"/><rect x="679.5" y="542.5" width="67.0" height="7" fill="#5878f0" stroke="#606060" stroke-width="1"/><rect x="746.5" y="544.5" width="67.0" height="5" fill="#5878f0" stroke="#606060" stroke-width="1"/><rect x="813.5" y="546.5" width="66.0" height="3" fill="#5878f0" stroke="#606060" stroke-width="1"/><rect x="879.5" y="548.5" width="67.0" height="1" fill="#5878f0" stroke="#606060" stroke-width="1"/><rect x="946.5" y="549.5" width="67.0" height="0" fill="#5878f0" stroke="#606060" stroke-width="1"/><rect x="1013.5" y="549.5" width="66.0" height="0" fill="#5878f0" stroke="#606060" stroke-width="1"/><rect x="633.5" y="549.5" width="46.0" height="0" fill="#f07676" stroke="#606060" stroke-width="1"/><rect x="679.5" y="549.5" width="67.0" height="0" fill="#f07676" stroke="#606060" stroke-width="1"/><rect x="746.5" y="549.5" width="67.0" height="0" fill="#f07676" stroke="#606060" stroke-width="1"/><rect x="813.5" y="549.5" width="66.0" height="0" fill="#f07676" stroke="#606060" stroke-width="1"/><rect x="879.5" y="549.5" width="67.0" height="0" fill="#f07676" stroke="#606060" stroke-width="1"/><rect x="946.5" y="549.5" width="67.0" height="1" fill="#f07676" stroke="#606060" stroke-width="1"/><rect x="1013.5" y="549.5" width="66.0" height="4" fill="#f07676" stroke="#606060" stroke-width="1"/><rect x="633.5" y="576.5" width="46.0" height="6" fill="#f07676" stroke="#606060" stroke-width="1"/><rect x="679.5" y="576.5" width="67.0" height="7" fill="#f07676" stroke="#606060" stroke-width="1"/><rect x="746.5" y="576.5" width="67.0" height="8" fill="#f07676" stroke="#606060" stroke-width="1"/><rect x="813.5" y="576.5" width="66.0" height="7" fill="#f07676" stroke="#606060" stroke-width="1"/><rect x="879.5" y="576.5" width="67.0" height="7" fill="#f07676" stroke="#606060" stroke-width="1"/><rect x="946.5" y="576.5" width="67.0" height="7" fill="#f07676" stroke="#606060" stroke-width="1"/><rect x="1013.5" y="576.5" width="66.0" height="8" fill="#f07676" stroke="#606060" stroke-width="1"/><rect x="633.5" y="597.5" width="46.0" height="6" fill="#5878f0" stroke="#606060" stroke-width="1"/><rect x="679.5" y="595.5" width="67.0" height="8" fill="#5878f0" stroke="#606060" stroke-width="1"/><rect x="746.5" y="595.5" width="67.0" height="8" fill="#5878f0" stroke="#606060" stroke-width="1"/><rect x="813.5" y="595.5" width="66.0" height="8" fill="#5878f0" stroke="#606060" stroke-width="1"/><rect x="879.5" y="595.5" width="67.0" height="8" fill="#5878f0" stroke="#606060" stroke-width="1"/><rect x="946.5" y="595.5" width="67.0" height="8" fill="#5878f0" stroke="#606060" stroke-width="1"/><rect x="1013.5" y="594.5" width="66.0" height="9" fill="#5878f0" stroke="#606060" stroke-width="1"/><rect x="633.5" y="631.5" width="46.0" height="6" fill="#f07676" stroke="#606060" stroke-width="1"/><rect x="679.5" y="631.5" width="67.0" height="7" fill="#f07676" stroke="#606060" stroke-width="1"/><rect x="746.5" y="631.5" width="67.0" height="8" fill="#f07676" stroke="#606060" stroke-width="1"/><rect x="813.5" y="631.5" width="66.0" height="8" fill="#f07676" stroke="#606060" stroke-width="1"/><rect x="879.5" y="631.5" width="67.0" height="7" fill="#f07676" stroke="#606060" stroke-width="1"/><rect x="946.5" y="631.5" width="67.0" height="8" fill="#f07676" stroke="#606060" stroke-width="1"/><rect x="1013.5" y="631.5" width="66.0" height="8" fill="#f07676" stroke="#606060" stroke-width="1"/><text x="611" y="517.7" text-anchor="middle" font-size="9.5" fill="#606060">PnL</text><text x="611" y="553.5" text-anchor="middle" font-size="9.5" fill="#606060">Delta</text><text x="611" y="581.0" text-anchor="middle" font-size="9.5" fill="#606060">Gamma</text><text x="611" y="608.5" text-anchor="middle" font-size="9.5" fill="#606060">Theta</text><text x="611" y="636.0" text-anchor="middle" font-size="9.5" fill="#606060">Vega</text><text x="645.8" y="503" text-anchor="middle" font-size="8.8" fill="#f06a6a">-7%</text><text x="645.8" y="512.3" text-anchor="middle" font-size="8.8" fill="#f06a6a">-8263</text><text x="712.5" y="503" text-anchor="middle" font-size="8.8" fill="#f06a6a">-4%</text><text x="712.5" y="512.3" text-anchor="middle" font-size="8.8" fill="#f06a6a">-4818</text><text x="779.1999999999999" y="503" text-anchor="middle" font-size="8.8" fill="#f06a6a">-2%</text><text x="779.1999999999999" y="512.3" text-anchor="middle" font-size="8.8" fill="#f06a6a">-2236</text><text x="845.9" y="503" text-anchor="middle" font-size="8.8" fill="#f06a6a">0%</text><text x="845.9" y="512.3" text-anchor="middle" font-size="8.8" fill="#f06a6a">-577</text><text x="1046.0" y="503" text-anchor="middle" font-size="8.8" fill="#f06a6a">-1%</text><text x="1046.0" y="512.3" text-anchor="middle" font-size="8.8" fill="#f06a6a">-1116</text><text x="912.5999999999999" y="521.5" text-anchor="middle" font-size="8.8" fill="#6a78f0">176</text><text x="912.5999999999999" y="530.5" text-anchor="middle" font-size="8.8" fill="#6a78f0">0%</text><text x="979.3" y="521.5" text-anchor="middle" font-size="8.8" fill="#6a78f0">21</text><text x="979.3" y="530.5" text-anchor="middle" font-size="8.8" fill="#6a78f0">0%</text><text x="645.8" y="558" text-anchor="middle" font-size="8.8" fill="#6a78f0">76.52</text><text x="712.5" y="558" text-anchor="middle" font-size="8.8" fill="#6a78f0">60.67</text><text x="779.1999999999999" y="558" text-anchor="middle" font-size="8.8" fill="#6a78f0">42.43</text><text x="845.9" y="558" text-anchor="middle" font-size="8.8" fill="#6a78f0">24.02</text><text x="912.5999999999999" y="558" text-anchor="middle" font-size="8.8" fill="#6a78f0">6.11</text><text x="979.3" y="549" text-anchor="middle" font-size="8.8" fill="#f06a6a">-12.58</text><text x="1046.0" y="549" text-anchor="middle" font-size="8.8" fill="#f06a6a">-33.21</text><text x="645.8" y="576.5" text-anchor="middle" font-size="8.8" fill="#f06a6a">-0.28</text><text x="712.5" y="576.5" text-anchor="middle" font-size="8.8" fill="#f06a6a">-0.35</text><text x="779.1999999999999" y="576.5" text-anchor="middle" font-size="8.8" fill="#f06a6a">-0.37</text><text x="845.9" y="576.5" text-anchor="middle" font-size="8.8" fill="#f06a6a">-0.36</text><text x="912.5999999999999" y="576.5" text-anchor="middle" font-size="8.8" fill="#f06a6a">-0.36</text><text x="979.3" y="576.5" text-anchor="middle" font-size="8.8" fill="#f06a6a">-0.39</text><text x="1046.0" y="576.5" text-anchor="middle" font-size="8.8" fill="#f06a6a">-0.43</text><text x="645.8" y="613" text-anchor="middle" font-size="8.8" fill="#6a78f0">368.22</text><text x="712.5" y="613" text-anchor="middle" font-size="8.8" fill="#6a78f0">497.45</text><text x="779.1999999999999" y="613" text-anchor="middle" font-size="8.8" fill="#6a78f0">549.61</text><text x="845.9" y="613" text-anchor="middle" font-size="8.8" fill="#6a78f0">535.92</text><text x="912.5999999999999" y="613" text-anchor="middle" font-size="8.8" fill="#6a78f0">518.39</text><text x="979.3" y="613" text-anchor="middle" font-size="8.8" fill="#6a78f0">543.76</text><text x="1046.0" y="613" text-anchor="middle" font-size="8.8" fill="#6a78f0">587.26</text><text x="645.8" y="631.3" text-anchor="middle" font-size="8.8" fill="#f06a6a">-198.24</text><text x="712.5" y="631.3" text-anchor="middle" font-size="8.8" fill="#f06a6a">-252.99</text><text x="779.1999999999999" y="631.3" text-anchor="middle" font-size="8.8" fill="#f06a6a">-272.25</text><text x="845.9" y="631.3" text-anchor="middle" font-size="8.8" fill="#f06a6a">-263.55</text><text x="912.5999999999999" y="631.3" text-anchor="middle" font-size="8.8" fill="#f06a6a">-257.22</text><text x="979.3" y="631.3" text-anchor="middle" font-size="8.8" fill="#f06a6a">-263.42</text><text x="1046.0" y="631.3" text-anchor="middle" font-size="8.8" fill="#f06a6a">-295.54</text><rect x="942.7" y="476.2" width="41.3" height="170" rx="3.5" fill="rgba(233,239,247,0.9)" stroke="#8a96aa" stroke-width="1"/><text x="963.3" y="484.5" text-anchor="middle" font-size="8.8" fill="#202020">6388.64</text><text x="963.3" y="513" text-anchor="middle" font-size="9.4" fill="#3848f0">139</text><text x="963.3" y="526.2" text-anchor="middle" font-size="9.6" fill="#3848f0">0.1%</text><text x="963.3" y="553" text-anchor="middle" font-size="9" fill="#e82020">-8.18</text><text x="963.3" y="580.7" text-anchor="middle" font-size="9" fill="#e82020">-0.38</text><text x="963.3" y="607.8" text-anchor="middle" font-size="9" fill="#2838e0">534.29</text><text x="963.3" y="635.8" text-anchor="middle" font-size="9" fill="#e82020">-268.02</text></svg>
<div style="left:585.4px;top:650.6px;width:494.6px;height:20.7px;background:#283552"></div>
<div class="t" style="left:1040px;top:655.2px;line-height:14px;color:#eef0f6;font-size:10px">500%</div>
<div style="left:1074px;top:660px;width:6px;height:2px;background:#8a92aa"></div>
</body></html>
